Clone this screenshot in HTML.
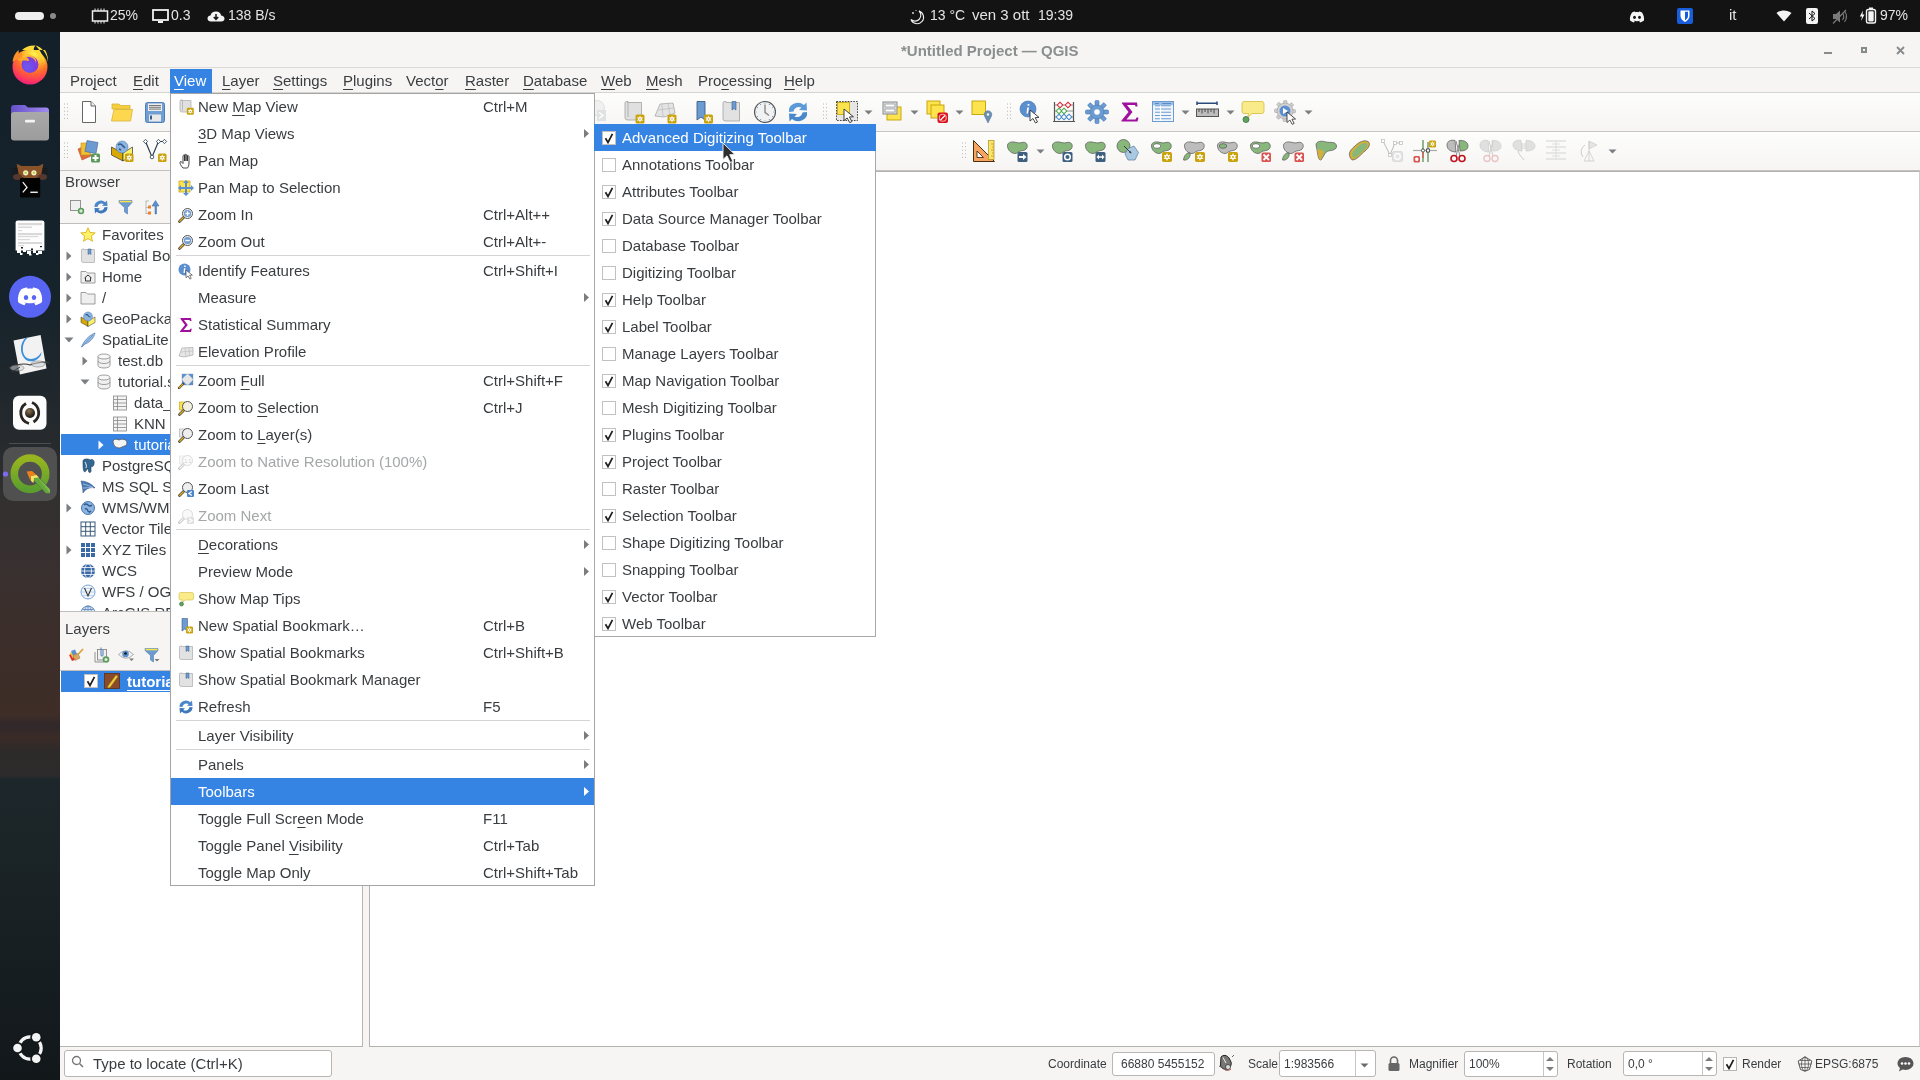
<!DOCTYPE html><html><head><meta charset="utf-8"><title>QGIS</title><style>
*{box-sizing:border-box}
html,body{margin:0;padding:0}
body{width:1920px;height:1080px;overflow:hidden;position:relative;font-family:"Liberation Sans",sans-serif;background:#f6f5f4;color:#3a3d40}
.a{position:absolute}
.t{position:absolute;white-space:pre;font-size:15px;line-height:18px;will-change:transform}
u{text-decoration:underline;text-underline-offset:3px;text-decoration-thickness:1px}
svg{position:absolute;overflow:visible}
</style></head><body>
<div class="a" style="left:0px;top:0px;width:1920px;height:32px;background:#131313"></div>
<div class="a" style="left:15px;top:12px;width:29px;height:8px;background:#eeeeee;border-radius:4px"></div>
<div class="a" style="left:50px;top:13px;width:6px;height:6px;background:#8a8a8a;border-radius:3px"></div>
<div class="t" style="left:110px;top:6px;font-size:14px;color:#e4e4e4;">25%</div>
<div class="t" style="left:171px;top:6px;font-size:14px;color:#e4e4e4;">0.3</div>
<div class="t" style="left:228px;top:6px;font-size:14px;color:#e4e4e4;">138 B/s</div>
<div class="t" style="left:930px;top:6px;font-size:14px;color:#e4e4e4;">13 °C</div>
<div class="t" style="left:972px;top:6px;color:#e4e4e4;">ven 3 ott</div>
<div class="t" style="left:1038px;top:6px;font-size:14px;color:#e4e4e4;">19:39</div>
<div class="t" style="left:1729px;top:6px;color:#e4e4e4;">it</div>
<div class="t" style="left:1880px;top:6px;font-size:14px;color:#e4e4e4;">97%</div>
<svg style="left:91px;top:8px;" width="18" height="16" viewBox="0 0 18 16"><rect x="1.5" y="3" width="15" height="10" fill="none" stroke="#eee" stroke-width="1.5"/><path d="M4 0.5 V3 M7 0.5 V3 M10 0.5 V3 M13 0.5 V3 M4 13 V15.5 M7 13 V15.5 M10 13 V15.5 M13 13 V15.5" stroke="#eee" stroke-width="1"/></svg><svg style="left:152px;top:9px;" width="17" height="15" viewBox="0 0 17 15"><rect x="1" y="1" width="15" height="10" fill="none" stroke="#f2f2f2" stroke-width="1.8"/><rect x="6" y="12" width="5" height="2" fill="#f2f2f2"/></svg><svg style="left:207px;top:11px;" width="18" height="11" viewBox="0 0 18 11"><path d="M4 10.5 C1.5 10.5 0.5 9 0.5 7.5 C0.5 5.5 2 4.5 3.5 4.5 C4 2 6 0.5 9 0.5 C12 0.5 14 2.5 14 4.5 C16 4.5 17.5 6 17.5 7.8 C17.5 9.5 16 10.5 14.5 10.5Z" fill="#f2f2f2"/><path d="M9 3 V8 M6.8 6 L9 8.3 L11.2 6" stroke="#131313" stroke-width="1.5" fill="none"/></svg><svg style="left:909px;top:9px;" width="16" height="15" viewBox="0 0 16 15"><path d="M10 2 A6.5 6.5 0 1 1 2 10.5 A5.5 5.5 0 0 0 10 2Z" fill="none" stroke="#eee" stroke-width="1.1"/><circle cx="4" cy="4" r="0.9" fill="#eee"/><circle cx="7" cy="1.5" r="0.6" fill="#eee"/></svg><svg style="left:1629px;top:11px;" width="16" height="12" viewBox="0 0 16 12"><path d="M3 1.5 C4.5 0.7 5.5 0.5 6 0.5 L6.3 1.2 C7.4 1 8.6 1 9.7 1.2 L10 0.5 C10.5 0.5 11.5 0.7 13 1.5 C14.7 4 15.3 6.5 15 9.5 C13.8 10.5 12.2 11.2 11 11.5 L10.2 10.2 C10.7 10 11.2 9.8 11.6 9.5 C9.3 10.6 6.7 10.6 4.4 9.5 C4.8 9.8 5.3 10 5.8 10.2 L5 11.5 C3.8 11.2 2.2 10.5 1 9.5 C0.7 6.5 1.3 4 3 1.5Z" fill="#f4f4f4"/><ellipse cx="5.5" cy="6.3" rx="1.4" ry="1.6" fill="#131313"/><ellipse cx="10.5" cy="6.3" rx="1.4" ry="1.6" fill="#131313"/></svg><svg style="left:1677px;top:8px;" width="16" height="16" viewBox="0 0 16 16"><rect x="0" y="0" width="16" height="16" rx="2" fill="#175ddc"/><path d="M3.5 2.5 H12.5 V8 C12.5 11 10 13 8 14 C6 13 3.5 11 3.5 8Z" fill="#fff"/><path d="M8 3.8 H11 V8 C11 10 9.5 11.5 8 12.3Z" fill="#175ddc"/></svg><svg style="left:1776px;top:10px;" width="16" height="12" viewBox="0 0 16 12"><path d="M8 11.5 L0.5 3 C4.5 -0.5 11.5 -0.5 15.5 3Z" fill="#f4f4f4"/></svg><svg style="left:1806px;top:8px;" width="12" height="16" viewBox="0 0 12 16"><rect x="0" y="0" width="12" height="16" rx="2" fill="#f4f4f4"/><path d="M3 5 L9 10.5 L6 13 V3 L9 5.5 L3 11" stroke="#131313" stroke-width="1" fill="none"/></svg><svg style="left:1832px;top:9px;" width="16" height="15" viewBox="0 0 16 15"><path d="M1 5 H4 L8 1.5 V13.5 L4 10 H1Z" fill="#7a7a7a"/><path d="M10.5 4 Q13 7.5 10.5 11 M12.5 2 Q16.5 7.5 12.5 13" stroke="#7a7a7a" stroke-width="1.1" fill="none"/><path d="M1 14.5 L14 1" stroke="#7a7a7a" stroke-width="1.2"/></svg><svg style="left:1859px;top:7px;" width="18" height="17" viewBox="0 0 18 17"><path d="M4 3.5 L0.8 9.5 H3 L2 14 L5.5 7.5 H3.5Z" fill="#f4f4f4"/><rect x="7.5" y="2.5" width="9" height="13.5" rx="1.8" fill="none" stroke="#f4f4f4" stroke-width="1.4"/><rect x="10" y="0.5" width="4" height="2" fill="#f4f4f4"/><rect x="9.3" y="4.2" width="5.4" height="10.2" rx="0.8" fill="#f4f4f4"/></svg>
<div class="a" style="left:0px;top:32px;width:60px;height:1048px;background:linear-gradient(180deg,#13202a 0px,#16232b 268px,#262a2d 408px,#333030 468px,#383030 528px,#3c2e2a 608px,#3e2d27 683px,#30282a 693px,#3a2b27 706px,#2e2a2a 718px,#2c2b2b 744px,#1d272b 747px,#1b2427 818px,#161d20 948px,#12171a 1048px)"></div>
<svg style="left:0;top:0" width="60" height="1080" viewBox="0 0 60 1080">
<defs>
<radialGradient id="ffg" cx="0.62" cy="0.12" r="0.95"><stop offset="0" stop-color="#fff44f"/><stop offset="0.3" stop-color="#ffbd2e"/><stop offset="0.55" stop-color="#ff6f2a"/><stop offset="0.8" stop-color="#ff3a5a"/><stop offset="1" stop-color="#e8178a"/></radialGradient>
<radialGradient id="ffp" cx="0.35" cy="0.65" r="0.8"><stop offset="0" stop-color="#6a5cf0"/><stop offset="0.6" stop-color="#7b3fe0"/><stop offset="1" stop-color="#a02fe0"/></radialGradient>
<linearGradient id="fldt" x1="0" y1="0" x2="1" y2="0"><stop offset="0" stop-color="#6650c8"/><stop offset="1" stop-color="#a08cf0"/></linearGradient>
<linearGradient id="fldb" x1="0" y1="0" x2="0" y2="1"><stop offset="0" stop-color="#a9a9a9"/><stop offset="1" stop-color="#9c9c9c"/></linearGradient>
<linearGradient id="qg" x1="0" y1="0" x2="0" y2="1"><stop offset="0" stop-color="#98b51f"/><stop offset="1" stop-color="#5b9e2f"/></linearGradient>
<radialGradient id="ball" cx="0.4" cy="0.3" r="0.7"><stop offset="0" stop-color="#8a7350"/><stop offset="1" stop-color="#151210"/></radialGradient>
</defs>
<!-- firefox -->
<circle cx="30" cy="67" r="17.5" fill="url(#ffg)"/>
<path d="M22 50 C25 47 30 45 35.5 45.5 C33 48 33.5 51 35 52.5 C40 55 44 60 45 66 C44 56 40 50 35.5 45.5 C42 47 47.5 54 48 62 C48.5 58 47 53 45 50Z" fill="#ffd93a"/>
<path d="M12.5 62 C13 57 15 53 18.5 50 L19 54.5 L22 51.5 C21.5 53.5 22 55 23 56 C19 57 16 60 12.5 62Z" fill="#ff8f2a"/>
<circle cx="30" cy="64.5" r="8.5" fill="url(#ffp)"/>
<path d="M17 60 C19.5 57.5 24 56.5 27 57.5 C28.5 58.5 29 60 29 61 C25 60 21 61 17 60Z" fill="#ffa92e"/>
<path d="M22 58 C24 54 30 53.5 33.5 56.5 C36 58.5 36.5 61 36 63 C35 59 31 56 26 57.5Z" fill="#ffbd2e" opacity="0.85"/>
<!-- files -->
<path d="M11 108 Q11 105 14 105 H25 L28 107.5 H46 Q49 107.5 49 110.5 V116 H11Z" fill="url(#fldt)"/>
<rect x="11" y="112" width="38" height="28.5" rx="3" fill="url(#fldb)"/>
<rect x="25" y="119.8" width="10" height="2.6" rx="1.2" fill="#f4f4f4"/>
<!-- terminal cat -->
<path d="M16.7 163.8 L21.5 166 H38.5 L43.3 163.8 L42 172 C41 177 37 178.5 30 178.5 C23 178.5 19 177 18 172Z" fill="#8a5228"/>
<path d="M11 168 L18 169 M11.5 171 L18 170.5 M12 174 L18.5 172 M42 169 L49 168 M42 170.5 L48.5 171 M41.5 172 L48 174" stroke="#1c1410" stroke-width="0.8"/>
<ellipse cx="17.5" cy="177" rx="4.5" ry="3" fill="#56382c"/><ellipse cx="42.5" cy="177" rx="4.5" ry="3" fill="#56382c"/>
<circle cx="25.7" cy="172.8" r="2.6" fill="#f4f4d0"/><circle cx="33.9" cy="172.8" r="2.6" fill="#f4f4d0"/>
<circle cx="25.7" cy="172.8" r="1.3" fill="#c4d040"/><circle cx="33.9" cy="172.8" r="1.3" fill="#c4d040"/>
<rect x="20" y="178" width="20.2" height="19.5" rx="1" fill="#020202"/>
<path d="M22.8 182.2 L27 187.4 L22.8 192.4" stroke="#f4f4f4" stroke-width="1.3" fill="none"/><path d="M30.3 192.3 H37.8" stroke="#e8e8e8" stroke-width="1.5"/>
<!-- text editor -->
<path d="M15.6 222.5 Q15.6 220.4 17.7 220.4 H42.3 Q44.4 220.4 44.4 222.5 V248 L15.6 248Z" fill="#fdfdfd"/>
<g fill="#d9d9d9"><rect x="18" y="223" width="24" height="2.2"/><rect x="18" y="226.5" width="14" height="1.5"/><rect x="18" y="230" width="4" height="1.2"/><rect x="18" y="233" width="24" height="2.2"/><rect x="18" y="236" width="20" height="1.2"/><rect x="18" y="239" width="12" height="1.2"/><rect x="18" y="242" width="24" height="2"/><rect x="18" y="245" width="6" height="1.2"/></g>
<g fill="#fdfdfd"><rect x="15.6" y="248" width="28.8" height="2.5"/><rect x="17" y="250" width="4" height="3"/><rect x="23" y="250" width="3" height="2"/><rect x="27" y="251" width="4" height="3"/><rect x="33" y="250" width="3" height="3"/><rect x="38" y="251" width="4" height="3"/><rect x="20" y="253" width="2.5" height="2"/><rect x="29" y="254" width="2.5" height="1.5"/><rect x="36" y="253" width="2.5" height="2"/></g>
<g fill="#131c22"><rect x="21" y="247" width="2" height="1.5"/><rect x="31" y="248.5" width="2" height="1.5"/><rect x="40" y="246" width="2" height="1.2"/></g>
<!-- discord -->
<circle cx="30" cy="296.8" r="21" fill="#5865f2"/>
<path d="M21 289.5 C23.5 288 26 287.5 27 287.5 L27.6 288.8 C29.3 288.5 30.7 288.5 32.4 288.8 L33 287.5 C34 287.5 36.5 288 39 289.5 C41.5 293 42.5 297 42 302 C40 303.8 37.5 304.8 35.5 305.2 L34.2 303 C35 302.7 35.8 302.3 36.5 301.8 C32.5 303.8 27.5 303.8 23.5 301.8 C24.2 302.3 25 302.7 25.8 303 L24.5 305.2 C22.5 304.8 20 303.8 18 302 C17.5 297 18.5 293 21 289.5Z" fill="#fff"/>
<ellipse cx="26" cy="297.5" rx="2.2" ry="2.5" fill="#5865f2"/><ellipse cx="34" cy="297.5" rx="2.2" ry="2.5" fill="#5865f2"/>
<!-- okular -->
<path d="M13.5 340.4 L40.6 335 L46.5 368.6 L19.9 374.5Z" fill="#f2f2f2"/>
<path d="M28 337.5 C21 343 21.5 355 27 358 C32 360.5 38 358 41.5 352 L41 355 C37 362 29 363 25 359 C19 353 20 342 26 337.8Z" fill="#3a8fd9"/>
<path d="M9 368 C16 364 25 363 30 365 C36 363 44 361 49 363" stroke="#3a3a3a" stroke-width="1.1" fill="none"/>
<ellipse cx="17" cy="368" rx="7" ry="3" fill="#cfd4d8" opacity="0.55" stroke="#555" stroke-width="0.8"/>
<ellipse cx="38" cy="364" rx="7" ry="3" fill="#cfd4d8" opacity="0.55" stroke="#555" stroke-width="0.8"/>
<path d="M12 372 L20 367" stroke="#333" stroke-width="0.9"/>
<!-- app -->
<rect x="13" y="395.7" width="33.5" height="34" rx="6" fill="#fcfcfc"/>
<path d="M26 403.5 A11 11 0 0 0 29 423.5" stroke="#2a2520" stroke-width="2.8" fill="none"/>
<path d="M33.5 422 A11 11 0 0 0 32 402.5" stroke="#2a2520" stroke-width="2.8" fill="none"/>
<circle cx="30" cy="413" r="5" fill="url(#ball)"/>
<rect x="9" y="443" width="42" height="1" fill="#4a4e50"/>
<!-- qgis -->
<rect x="3" y="447" width="54" height="54" rx="10" fill="#505050"/>
<circle cx="30" cy="473.7" r="15.7" fill="none" stroke="url(#qg)" stroke-width="7.6"/>
<path d="M29 476 L33 472 L52 491 L48 495Z" fill="#505050"/>
<path d="M31.5 478 L35 474.5 L50 489.5 L50 493.3 L46 493.3Z" fill="#63a838"/>
<path d="M35 474.5 L50 489.5 L50 493.3Z" fill="#7fb950"/>
<path d="M26.6 471.5 L32 471 L36.5 475 L31 476 L30.5 481Z" fill="#f07f1a"/>
<path d="M31 476 L36.5 475 L39 477.5 L34 478 L33.5 483 L31 481Z" fill="#f5e462"/>
<circle cx="5.5" cy="474" r="2.6" fill="#7b6cf0"/>
<!-- ubuntu -->
<circle cx="30" cy="1048" r="11.2" fill="none" stroke="#f4f4f4" stroke-width="3.2"/>
<circle cx="17.5" cy="1048" r="6" fill="#12171a"/><circle cx="36.25" cy="1037.2" r="6" fill="#12171a"/><circle cx="36.25" cy="1058.8" r="6" fill="#12171a"/>
<circle cx="17.5" cy="1048" r="4.3" fill="#f4f4f4"/><circle cx="36.25" cy="1037.2" r="4.3" fill="#f4f4f4"/><circle cx="36.25" cy="1058.8" r="4.3" fill="#f4f4f4"/>
</svg>
<div class="a" style="left:60px;top:32px;width:1860px;height:36px;background:#f6f5f4;border-bottom:1px solid #dcdad7"></div>
<div class="t" style="left:901px;top:42px;color:#8a8e8f;font-weight:bold;">*Untitled Project — QGIS</div>
<div class="a" style="left:1824px;top:52px;width:8px;height:2px;background:#888b8c"></div>
<div class="a" style="left:1861px;top:47px;width:6px;height:6px;border:2px solid #888b8c"></div>
<svg style="left:1896px;top:46px;" width="9" height="9" viewBox="0 0 9 9"><path d="M1 1 L8 8 M8 1 L1 8" stroke="#888b8c" stroke-width="1.9"/></svg>
<div class="a" style="left:60px;top:68px;width:1860px;height:25px;background:#f6f5f4;border-bottom:1px solid #d6d4d0"></div>
<div class="a" style="left:170px;top:69px;width:42px;height:24px;background:#3584e4"></div>
<div class="t" style="left:70px;top:72px;">Pro<u>j</u>ect</div>
<div class="t" style="left:133px;top:72px;"><u>E</u>dit</div>
<div class="t" style="left:174px;top:72px;color:#ffffff;"><u>V</u>iew</div>
<div class="t" style="left:222px;top:72px;"><u>L</u>ayer</div>
<div class="t" style="left:273px;top:72px;"><u>S</u>ettings</div>
<div class="t" style="left:343px;top:72px;"><u>P</u>lugins</div>
<div class="t" style="left:406px;top:72px;">Vect<u>o</u>r</div>
<div class="t" style="left:465px;top:72px;"><u>R</u>aster</div>
<div class="t" style="left:523px;top:72px;"><u>D</u>atabase</div>
<div class="t" style="left:601px;top:72px;"><u>W</u>eb</div>
<div class="t" style="left:646px;top:72px;"><u>M</u>esh</div>
<div class="t" style="left:698px;top:72px;">Pro<u>c</u>essing</div>
<div class="t" style="left:784px;top:72px;"><u>H</u>elp</div>
<div class="a" style="left:60px;top:93px;width:1860px;height:39px;background:linear-gradient(#fdfdfc,#f6f5f4);border-bottom:1px solid #c8c6c2"></div>
<div class="a" style="left:60px;top:132px;width:1860px;height:39px;background:linear-gradient(#fdfdfc,#f6f5f4);border-bottom:1px solid #c4c2be"></div>
<svg style="left:63px;top:103px;" width="8" height="18" viewBox="0 0 8 18"><rect x="1" y="0.5" width="1" height="1" fill="#b5b5b5"/><rect x="4" y="0.5" width="1" height="1" fill="#b5b5b5"/><rect x="1" y="4.1" width="1" height="1" fill="#b5b5b5"/><rect x="4" y="4.1" width="1" height="1" fill="#b5b5b5"/><rect x="1" y="7.7" width="1" height="1" fill="#b5b5b5"/><rect x="4" y="7.7" width="1" height="1" fill="#b5b5b5"/><rect x="1" y="11.3" width="1" height="1" fill="#b5b5b5"/><rect x="4" y="11.3" width="1" height="1" fill="#b5b5b5"/><rect x="1" y="14.9" width="1" height="1" fill="#b5b5b5"/><rect x="4" y="14.9" width="1" height="1" fill="#b5b5b5"/></svg>
<svg style="left:77px;top:100px;" width="24" height="24" viewBox="0 0 24 24"><path d="M5.5 1.5 H14 L18.5 6 V22.5 H5.5 Z" fill="#fff" stroke="#666" stroke-width="1"/><path d="M14 1.5 V6 H18.5" fill="#eee" stroke="#666" stroke-width="1"/></svg>
<svg style="left:110px;top:100px;" width="24" height="24" viewBox="0 0 24 24"><path d="M2 4 H9 L10.5 5.5 H20 V9 H2Z" fill="#f5cf3d" stroke="#d8b23a" stroke-width="0.8"/><path d="M1.5 21 L4 9.5 H22.5 L20.5 21Z" fill="#fdd84f" stroke="#d8b23a" stroke-width="0.8"/></svg>
<svg style="left:143px;top:100px;" width="24" height="24" viewBox="0 0 24 24"><rect x="2.5" y="2.5" width="19" height="20" rx="2" fill="#6f9fd5" stroke="#4f7fb8"/><rect x="5" y="3.5" width="14" height="7.5" fill="#eee"/><path d="M6 5.5 H18 M6 7.3 H18 M6 9.1 H18" stroke="#555" stroke-width="0.8"/><rect x="6" y="14.5" width="12" height="7" fill="#e8e8e8"/><rect x="7" y="15.5" width="2" height="4" fill="#3b5f8a"/></svg>
<svg style="left:589px;top:100px;" width="24" height="24" viewBox="0 0 24 24"><circle cx="8" cy="8" r="7.5" fill="#f0f0f0" stroke="#e0e0e0"/><rect x="8" y="10" width="9" height="11" fill="#dfe1e3"/><path d="M10 12.5 L14 15.5 L10 18.5" stroke="#fff" stroke-width="1.5" fill="none"/></svg>
<svg style="left:622px;top:100px;" width="24" height="24" viewBox="0 0 24 24"><path d="M3 3 Q3 1.5 4.5 1.5 H6 V2.5 H19.5 V20 H6 Q3 20 3 18Z" fill="#e0e0e0" stroke="#aaa" stroke-width="0.9"/><path d="M4.5 1.5 Q6 1.5 6 3 V17" stroke="#aaa" stroke-width="0.9" fill="none"/><rect x="13.5" y="14.5" width="9" height="9" rx="1.62" fill="#c9a20c"/><polygon points="18.00,15.40 18.90,17.44 21.12,17.20 19.80,19.00 21.12,20.80 18.90,20.56 18.00,22.60 17.10,20.56 14.88,20.80 16.20,19.00 14.88,17.20 17.10,17.44" fill="#fff"/><circle cx="18.0" cy="19.0" r="0.81" fill="#c9a20c"/></svg>
<svg style="left:654px;top:100px;" width="24" height="24" viewBox="0 0 24 24"><path d="M1 16 L6 4 L19 3 L21 13 L10 17Z" fill="#e4e4e4" stroke="#aaa" stroke-width="0.8"/><path d="M4 10 L20 8 M8 4 L9 16 M14 3.5 L16 15" stroke="#bbb" stroke-width="0.7"/><rect x="13.5" y="14.5" width="9" height="9" rx="1.62" fill="#c9a20c"/><polygon points="18.00,15.40 18.90,17.44 21.12,17.20 19.80,19.00 21.12,20.80 18.90,20.56 18.00,22.60 17.10,20.56 14.88,20.80 16.20,19.00 14.88,17.20 17.10,17.44" fill="#fff"/><circle cx="18.0" cy="19.0" r="0.81" fill="#c9a20c"/></svg>
<svg style="left:690px;top:100px;" width="24" height="24" viewBox="0 0 24 24"><path d="M7 1.5 H15 V20 L11 17 L7 20Z" fill="#6b9bd1" stroke="#3c5f8a" stroke-width="0.9"/><rect x="14" y="14.5" width="9" height="9" rx="1.62" fill="#c9a20c"/><polygon points="18.50,15.40 19.40,17.44 21.62,17.20 20.30,19.00 21.62,20.80 19.40,20.56 18.50,22.60 17.60,20.56 15.38,20.80 16.70,19.00 15.38,17.20 17.60,17.44" fill="#fff"/><circle cx="18.5" cy="19.0" r="0.81" fill="#c9a20c"/></svg>
<svg style="left:720px;top:100px;" width="24" height="24" viewBox="0 0 24 24"><path d="M3 3 Q3 1.5 4.5 1.5 H6 V2.5 H19.5 V21 H6 Q3 21 3 19Z" fill="#e2e2e2" stroke="#aaa" stroke-width="0.9"/><path d="M12 1.5 H16 V10 L14 8.5 L12 10Z" fill="#6b9bd1" stroke="#3c5f8a" stroke-width="0.6"/></svg>
<svg style="left:753px;top:100px;" width="24" height="24" viewBox="0 0 24 24"><circle cx="12" cy="12" r="10.5" fill="#f2f2f2" stroke="#555" stroke-width="1.1"/><path d="M12 4.5 V12.3 L16 15.5" stroke="#888" stroke-width="1.4" fill="none"/><g fill="#6b9bd1"><circle cx="20.80" cy="12.00" r="0.6"/><circle cx="19.62" cy="16.40" r="0.6"/><circle cx="16.40" cy="19.62" r="0.6"/><circle cx="12.00" cy="20.80" r="0.6"/><circle cx="7.60" cy="19.62" r="0.6"/><circle cx="4.38" cy="16.40" r="0.6"/><circle cx="3.20" cy="12.00" r="0.6"/><circle cx="4.38" cy="7.60" r="0.6"/><circle cx="7.60" cy="4.38" r="0.6"/><circle cx="12.00" cy="3.20" r="0.6"/><circle cx="16.40" cy="4.38" r="0.6"/><circle cx="19.62" cy="7.60" r="0.6"/></g></svg>
<svg style="left:786px;top:100px;" width="24" height="24" viewBox="0 0 24 24"><path d="M3 12 A9 8 0 0 1 18 5 L20.5 2.5 L21 10.5 L13 10 L15.5 7.5 A5.5 5 0 0 0 7.5 11.5Z" fill="#5a9ad8"/><path d="M21 12 A9 8 0 0 1 6 19 L3.5 21.5 L3 13.5 L11 14 L8.5 16.5 A5.5 5 0 0 0 16.5 12.5Z" fill="#4a88cc"/></svg>
<svg style="left:835px;top:100px;" width="24" height="24" viewBox="0 0 24 24"><rect x="1.5" y="1.5" width="21" height="19" fill="#e6e6e6" stroke="#333" stroke-width="0.9" stroke-dasharray="1.6 1.2"/><rect x="2.5" y="2.5" width="12" height="12" fill="#fde34e" stroke="#c4a000" stroke-width="0.8"/><path transform="translate(9 9) scale(1.05)" d="M0 0 L0 11 L3 8.5 L5.5 13 L7.5 12 L5.2 7.6 L9 7.4 Z" fill="#fff" stroke="#333" stroke-width="0.9" stroke-linejoin="round"/></svg>
<svg style="left:882px;top:100px;" width="24" height="24" viewBox="0 0 24 24"><rect x="5" y="7" width="14" height="13" fill="#fde34e" stroke="#c4a000" stroke-width="0.9"/><rect x="1" y="2" width="14" height="12" fill="#e0e4ea" stroke="#888" stroke-width="1"/><rect x="3" y="4" width="10" height="3" fill="#fff" stroke="#777" stroke-width="0.6"/><rect x="3" y="9" width="10" height="3" fill="#fff" stroke="#777" stroke-width="0.6"/></svg>
<svg style="left:926px;top:100px;" width="24" height="24" viewBox="0 0 24 24"><rect x="1" y="1" width="13" height="13" fill="#fde34e" stroke="#c4a000" stroke-width="0.9"/><rect x="5" y="5" width="13" height="13" fill="#fde34e" stroke="#c4a000" stroke-width="0.9"/><rect x="11.5" y="12.5" width="10.5" height="10.5" rx="2" fill="#d8111b"/><circle cx="16.75" cy="17.75" r="3.5" fill="none" stroke="#f4a0a0" stroke-width="1.2"/><path d="M14.5 20 L19 15.5" stroke="#fff" stroke-width="1.2"/></svg>
<svg style="left:971px;top:100px;" width="24" height="24" viewBox="0 0 24 24"><rect x="1" y="1" width="13.5" height="13.5" fill="#fde34e" stroke="#c4a000" stroke-width="0.9"/><path d="M17 23 L13.5 16 A3.8 3.8 0 1 1 20.5 16Z" fill="#6b8fb0" stroke="#4f6f90" stroke-width="0.5"/><circle cx="17" cy="14.5" r="1.2" fill="#fff"/></svg>
<svg style="left:1019px;top:100px;" width="24" height="24" viewBox="0 0 24 24"><circle cx="9" cy="9" r="8" fill="#5b8fd0" stroke="#4070b0" stroke-width="0.6"/><path d="M8.2 7.5 H10 L9 13.5 H7.5Z M8.6 4 h1.8 v1.8 h-1.8z" fill="#fff"/><path transform="translate(11 10) scale(1.0)" d="M0 0 L0 11 L3 8.5 L5.5 13 L7.5 12 L5.2 7.6 L9 7.4 Z" fill="#fff" stroke="#333" stroke-width="0.9" stroke-linejoin="round"/></svg>
<svg style="left:1052px;top:100px;" width="24" height="24" viewBox="0 0 24 24"><path d="M2.5 2 V21 M21.5 2 V21 M1 21.5 H23" stroke="#555" stroke-width="1.2"/><path d="M2.5 5 H21.5 M2.5 11 H21.5 M2.5 17 H21.5" stroke="#777" stroke-width="0.8"/><rect x="6" y="3" width="4" height="4" transform="rotate(45 8 5)" fill="#fff" stroke="#d23" stroke-width="1"/><rect x="14" y="3" width="4" height="4" transform="rotate(45 16 5)" fill="#fff" stroke="#d23" stroke-width="1"/><rect x="5" y="9" width="4" height="4" transform="rotate(45 7 11)" fill="#fff" stroke="#4a4" stroke-width="1"/><rect x="10" y="9" width="4" height="4" transform="rotate(45 12 11)" fill="#fff" stroke="#4a4" stroke-width="1"/><rect x="5" y="15" width="4" height="4" transform="rotate(45 7 17)" fill="#fff" stroke="#48c" stroke-width="1"/><rect x="10" y="15" width="4" height="4" transform="rotate(45 12 17)" fill="#fff" stroke="#48c" stroke-width="1"/><rect x="15" y="15" width="4" height="4" transform="rotate(45 17 17)" fill="#fff" stroke="#48c" stroke-width="1"/></svg>
<svg style="left:1085px;top:100px;" width="24" height="24" viewBox="0 0 24 24"><g fill="#6b9bd1" stroke="#4a7ab5" stroke-width="0.6"><rect x="10" y="0.5" width="4" height="5.5" rx="1" transform="rotate(0 12 12)"/><rect x="10" y="0.5" width="4" height="5.5" rx="1" transform="rotate(45 12 12)"/><rect x="10" y="0.5" width="4" height="5.5" rx="1" transform="rotate(90 12 12)"/><rect x="10" y="0.5" width="4" height="5.5" rx="1" transform="rotate(135 12 12)"/><rect x="10" y="0.5" width="4" height="5.5" rx="1" transform="rotate(180 12 12)"/><rect x="10" y="0.5" width="4" height="5.5" rx="1" transform="rotate(225 12 12)"/><rect x="10" y="0.5" width="4" height="5.5" rx="1" transform="rotate(270 12 12)"/><rect x="10" y="0.5" width="4" height="5.5" rx="1" transform="rotate(315 12 12)"/><circle cx="12" cy="12" r="7"/></g><circle cx="12" cy="12" r="2.8" fill="#fff"/></svg>
<svg style="left:1118px;top:100px;" width="24" height="24" viewBox="0 0 24 24"><path d="M4 2.5 H19 L19.5 6.5 H17.5 L17 5 H9 L14.5 12 L8.5 19.5 H17.5 L18.5 17.5 H20.5 L19.5 21.5 H3.5 V20.5 L10.5 12 L4 3.5Z" fill="#a0109f"/></svg>
<svg style="left:1151px;top:100px;" width="24" height="24" viewBox="0 0 24 24"><rect x="1.5" y="1.5" width="21" height="20" fill="#f0f5fb" stroke="#6b9bd1" stroke-width="1"/><rect x="2" y="2" width="20" height="3.2" fill="#9cc0e6"/><path d="M4 5.8 H20 M4 9 H20 M4 12.3 H20 M4 15.5 H20 M4 18.7 H20" stroke="#6b9bd1" stroke-width="1.1"/><path d="M9.5 5.5 V21" stroke="#fff" stroke-width="1.2"/><path d="M4 3.5 H8 M11 3.5 H20" stroke="#5b8bc1" stroke-width="1.2"/></svg>
<svg style="left:1196px;top:100px;" width="24" height="24" viewBox="0 0 24 24"><path d="M1 1.5 V5 M1 3.2 H21 M21 1.5 V5" stroke="#2a4a7a" stroke-width="1.5"/><rect x="0.5" y="9" width="22" height="7.5" fill="#bdbdbd" stroke="#555" stroke-width="1"/><path d="M3 9 V12 M6 9 V13.5 M9 9 V12 M12 9 V13.5 M15 9 V12 M18 9 V13.5" stroke="#333" stroke-width="0.8"/></svg>
<svg style="left:1241px;top:100px;" width="24" height="24" viewBox="0 0 24 24"><path d="M3 1.5 H21 Q23 1.5 23 4 V11 Q23 13.5 21 13.5 H11 L7 17 L7.5 13.5 H3 Q1 13.5 1 11 V4 Q1 1.5 3 1.5Z" fill="#faeb8a" stroke="#d9c34a" stroke-width="0.9"/><circle cx="5" cy="19.5" r="3" fill="#5fa35f" stroke="#3b703b" stroke-width="0.8"/></svg>
<svg style="left:1274px;top:100px;" width="24" height="24" viewBox="0 0 24 24"><g fill="#d0d0d0" stroke="#999" stroke-width="0.5"><rect x="9.5" y="0.5" width="3.5" height="4.5" rx="1" transform="rotate(0 11 11)"/><rect x="9.5" y="0.5" width="3.5" height="4.5" rx="1" transform="rotate(45 11 11)"/><rect x="9.5" y="0.5" width="3.5" height="4.5" rx="1" transform="rotate(90 11 11)"/><rect x="9.5" y="0.5" width="3.5" height="4.5" rx="1" transform="rotate(135 11 11)"/><rect x="9.5" y="0.5" width="3.5" height="4.5" rx="1" transform="rotate(180 11 11)"/><rect x="9.5" y="0.5" width="3.5" height="4.5" rx="1" transform="rotate(225 11 11)"/><rect x="9.5" y="0.5" width="3.5" height="4.5" rx="1" transform="rotate(270 11 11)"/><rect x="9.5" y="0.5" width="3.5" height="4.5" rx="1" transform="rotate(315 11 11)"/><circle cx="11" cy="11" r="8"/></g><circle cx="11" cy="11" r="5.5" fill="#5b8fd0"/><path d="M9 8 L14 11 L9 14Z" fill="#fff"/><path transform="translate(13 12) scale(0.95)" d="M0 0 L0 11 L3 8.5 L5.5 13 L7.5 12 L5.2 7.6 L9 7.4 Z" fill="#fff" stroke="#333" stroke-width="0.9" stroke-linejoin="round"/></svg>
<svg style="left:822px;top:103px;" width="8" height="18" viewBox="0 0 8 18"><rect x="1" y="0.5" width="1" height="1" fill="#b5b5b5"/><rect x="4" y="0.5" width="1" height="1" fill="#b5b5b5"/><rect x="1" y="4.1" width="1" height="1" fill="#b5b5b5"/><rect x="4" y="4.1" width="1" height="1" fill="#b5b5b5"/><rect x="1" y="7.7" width="1" height="1" fill="#b5b5b5"/><rect x="4" y="7.7" width="1" height="1" fill="#b5b5b5"/><rect x="1" y="11.3" width="1" height="1" fill="#b5b5b5"/><rect x="4" y="11.3" width="1" height="1" fill="#b5b5b5"/><rect x="1" y="14.9" width="1" height="1" fill="#b5b5b5"/><rect x="4" y="14.9" width="1" height="1" fill="#b5b5b5"/></svg>
<svg style="left:1006px;top:103px;" width="8" height="18" viewBox="0 0 8 18"><rect x="1" y="0.5" width="1" height="1" fill="#b5b5b5"/><rect x="4" y="0.5" width="1" height="1" fill="#b5b5b5"/><rect x="1" y="4.1" width="1" height="1" fill="#b5b5b5"/><rect x="4" y="4.1" width="1" height="1" fill="#b5b5b5"/><rect x="1" y="7.7" width="1" height="1" fill="#b5b5b5"/><rect x="4" y="7.7" width="1" height="1" fill="#b5b5b5"/><rect x="1" y="11.3" width="1" height="1" fill="#b5b5b5"/><rect x="4" y="11.3" width="1" height="1" fill="#b5b5b5"/><rect x="1" y="14.9" width="1" height="1" fill="#b5b5b5"/><rect x="4" y="14.9" width="1" height="1" fill="#b5b5b5"/></svg>
<svg style="left:864px;top:110px" width="9" height="5"><path d="M0.5 0.5 H8.5 L4.5 4.5Z" fill="#7b7e80"/></svg>
<svg style="left:910px;top:110px" width="9" height="5"><path d="M0.5 0.5 H8.5 L4.5 4.5Z" fill="#7b7e80"/></svg>
<svg style="left:955px;top:110px" width="9" height="5"><path d="M0.5 0.5 H8.5 L4.5 4.5Z" fill="#7b7e80"/></svg>
<svg style="left:1181px;top:110px" width="9" height="5"><path d="M0.5 0.5 H8.5 L4.5 4.5Z" fill="#7b7e80"/></svg>
<svg style="left:1226px;top:110px" width="9" height="5"><path d="M0.5 0.5 H8.5 L4.5 4.5Z" fill="#7b7e80"/></svg>
<svg style="left:1304px;top:110px" width="9" height="5"><path d="M0.5 0.5 H8.5 L4.5 4.5Z" fill="#7b7e80"/></svg>
<svg style="left:63px;top:142px;" width="8" height="18" viewBox="0 0 8 18"><rect x="1" y="0.5" width="1" height="1" fill="#b5b5b5"/><rect x="4" y="0.5" width="1" height="1" fill="#b5b5b5"/><rect x="1" y="4.1" width="1" height="1" fill="#b5b5b5"/><rect x="4" y="4.1" width="1" height="1" fill="#b5b5b5"/><rect x="1" y="7.7" width="1" height="1" fill="#b5b5b5"/><rect x="4" y="7.7" width="1" height="1" fill="#b5b5b5"/><rect x="1" y="11.3" width="1" height="1" fill="#b5b5b5"/><rect x="4" y="11.3" width="1" height="1" fill="#b5b5b5"/><rect x="1" y="14.9" width="1" height="1" fill="#b5b5b5"/><rect x="4" y="14.9" width="1" height="1" fill="#b5b5b5"/></svg>
<svg style="left:961px;top:142px;" width="8" height="18" viewBox="0 0 8 18"><rect x="1" y="0.5" width="1" height="1" fill="#b5b5b5"/><rect x="4" y="0.5" width="1" height="1" fill="#b5b5b5"/><rect x="1" y="4.1" width="1" height="1" fill="#b5b5b5"/><rect x="4" y="4.1" width="1" height="1" fill="#b5b5b5"/><rect x="1" y="7.7" width="1" height="1" fill="#b5b5b5"/><rect x="4" y="7.7" width="1" height="1" fill="#b5b5b5"/><rect x="1" y="11.3" width="1" height="1" fill="#b5b5b5"/><rect x="4" y="11.3" width="1" height="1" fill="#b5b5b5"/><rect x="1" y="14.9" width="1" height="1" fill="#b5b5b5"/><rect x="4" y="14.9" width="1" height="1" fill="#b5b5b5"/></svg>
<svg style="left:77px;top:139px;" width="24" height="24" viewBox="0 0 24 24"><path d="M1 10 L10 6 L14 17 L5 21Z" fill="#e06b3a" stroke="#b5542c" stroke-width="0.6"/><path d="M4 4 L13 4 L13 16 L4 16Z" fill="#f0c030" stroke="#c09020" stroke-width="0.6"/><path d="M10 1.5 L21 3.5 L19 14.5 L8 12.5Z" fill="#6b9bd1" stroke="#41648f" stroke-width="0.6"/><rect x="14" y="14.5" width="9" height="9" rx="1.5" fill="#5a9a5a"/><path d="M18.5 16.0 V22.0 M15.5 19.0 H21.5" stroke="#fff" stroke-width="2"/></svg>
<svg style="left:110px;top:139px;" width="24" height="24" viewBox="0 0 24 24"><path d="M1.5 8 L13 14 L13 22 L1.5 16Z" fill="#d9a800" stroke="#333" stroke-width="0.7"/><path d="M13 14 L22.5 8 L22.5 16 L13 22Z" fill="#fbf06a" stroke="#333" stroke-width="0.7"/><circle cx="12" cy="8" r="6" fill="#8db4e0" stroke="#5780b0" stroke-width="0.6"/><path d="M8 6 Q10 4 12 6 T15 9 M9 10 L11 11" stroke="#2e5a8a" stroke-width="1.6" fill="none"/><rect x="15" y="14.5" width="8.5" height="8.5" rx="1.53" fill="#c9a20c"/><polygon points="19.25,15.35 20.10,17.28 22.19,17.05 20.95,18.75 22.19,20.45 20.10,20.22 19.25,22.15 18.40,20.22 16.31,20.45 17.55,18.75 16.31,17.05 18.40,17.28" fill="#fff"/><circle cx="19.25" cy="18.75" r="0.77" fill="#c9a20c"/></svg>
<svg style="left:143px;top:139px;" width="24" height="24" viewBox="0 0 24 24"><path d="M2.5 2.5 L9 18 L15.5 2.5 L21.5 2.5" stroke="#2d3e50" stroke-width="1.2" fill="none"/><rect x="1" y="1" width="3" height="3" transform="rotate(45 2.5 2.5)" fill="#fff" stroke="#2d3e50" stroke-width="0.8"/><rect x="14" y="1" width="3" height="3" transform="rotate(45 15.5 2.5)" fill="#fff" stroke="#2d3e50" stroke-width="0.8"/><rect x="20" y="1" width="3" height="3" transform="rotate(45 21.5 2.5)" fill="#fff" stroke="#2d3e50" stroke-width="0.8"/><circle cx="9" cy="18" r="1.8" fill="#fff" stroke="#2d3e50" stroke-width="0.8"/><rect x="15" y="14.5" width="8.5" height="8.5" rx="1.53" fill="#c9a20c"/><polygon points="19.25,15.35 20.10,17.28 22.19,17.05 20.95,18.75 22.19,20.45 20.10,20.22 19.25,22.15 18.40,20.22 16.31,20.45 17.55,18.75 16.31,17.05 18.40,17.28" fill="#fff"/><circle cx="19.25" cy="18.75" r="0.77" fill="#c9a20c"/></svg>
<svg style="left:972px;top:139px;" width="24" height="24" viewBox="0 0 24 24"><path d="M1.5 1.5 L22.5 22.5 H1.5Z" fill="#f7a460" stroke="#4a2e10" stroke-width="1"/><path d="M5 12 L11.5 18.5 H5Z" fill="#fff" stroke="#4a2e10" stroke-width="0.9"/><rect x="16.5" y="1.5" width="5.5" height="19" fill="#fbe46a" stroke="#b59a2a" stroke-width="0.8"/><path d="M19 5 H22 M20 8 H22 M19 11 H22 M20 14 H22 M19 17 H22" stroke="#b59a2a" stroke-width="0.8"/></svg>
<svg style="left:1005px;top:139px;" width="24" height="24" viewBox="0 0 24 24"><path d="M2.5 7.5 C2 3.5 6 2.5 9 3 C12 3.5 14 4.5 17 3.5 C21 2.5 23 5.5 22 8.5 C21 11.5 18 11.5 15.5 12 C13 12.5 12.5 14.5 10 14.5 C6.5 14.5 3 11.5 2.5 7.5Z" fill="#88b77b" stroke="#555" stroke-width="0.7"/><rect x="12.5" y="13" width="10" height="10" rx="1.5" fill="#3f5f7f"/><path d="M14 17 H18 V15 L21.5 18 L18 21 V19 H14Z" fill="#fff"/></svg>
<svg style="left:1050px;top:139px;" width="24" height="24" viewBox="0 0 24 24"><path d="M2.5 7.5 C2 3.5 6 2.5 9 3 C12 3.5 14 4.5 17 3.5 C21 2.5 23 5.5 22 8.5 C21 11.5 18 11.5 15.5 12 C13 12.5 12.5 14.5 10 14.5 C6.5 14.5 3 11.5 2.5 7.5Z" fill="#88b77b" stroke="#555" stroke-width="0.7"/><rect x="12.5" y="13" width="10" height="10" rx="1.5" fill="#3f5f7f"/><circle cx="17.5" cy="18" r="2.8" fill="none" stroke="#fff" stroke-width="1.5"/></svg>
<svg style="left:1083px;top:139px;" width="24" height="24" viewBox="0 0 24 24"><path d="M2.5 7.5 C2 3.5 6 2.5 9 3 C12 3.5 14 4.5 17 3.5 C21 2.5 23 5.5 22 8.5 C21 11.5 18 11.5 15.5 12 C13 12.5 12.5 14.5 10 14.5 C6.5 14.5 3 11.5 2.5 7.5Z" fill="#88b77b" stroke="#555" stroke-width="0.7"/><rect x="12.5" y="13" width="10" height="10" rx="1.5" fill="#3f5f7f"/><path d="M13.5 18 L16 15.5 V20.5Z M21.5 18 L19 15.5 V20.5Z M16 17.2 H19 V18.8 H16Z" fill="#fff"/></svg>
<svg style="left:1116px;top:139px;" width="24" height="24" viewBox="0 0 24 24"><circle cx="7.5" cy="7" r="6.5" fill="#88b77b" stroke="#555" stroke-width="0.7"/><path d="M12 9.5 L18 7 L22.5 13.5 L19 21 H12 L9 15Z" fill="#a9c9e3" stroke="#5a7a9a" stroke-width="0.7"/><path d="M8 7 L15 14" stroke="#333" stroke-width="1"/><path d="M15.5 14.5 L13 13.8 L14.8 12Z" fill="#333"/></svg>
<svg style="left:1149px;top:139px;" width="24" height="24" viewBox="0 0 24 24"><path d="M2.5 7.5 C2 3.5 6 2.5 9 3 C12 3.5 14 4.5 17 3.5 C21 2.5 23 5.5 22 8.5 C21 11.5 18 11.5 15.5 12 C13 12.5 12.5 14.5 10 14.5 C6.5 14.5 3 11.5 2.5 7.5Z" fill="#88b77b" stroke="#555" stroke-width="0.7"/><ellipse cx="8" cy="7" rx="3.8" ry="2.3" fill="#fff" stroke="#555" stroke-width="0.7"/><rect x="13" y="13" width="10" height="10" rx="1.80" fill="#c9a20c"/><polygon points="18.00,14.00 19.00,16.27 21.46,16.00 20.00,18.00 21.46,20.00 19.00,19.73 18.00,22.00 17.00,19.73 14.54,20.00 16.00,18.00 14.54,16.00 17.00,16.27" fill="#fff"/><circle cx="18.0" cy="18.0" r="0.90" fill="#c9a20c"/></svg>
<svg style="left:1182px;top:139px;" width="24" height="24" viewBox="0 0 24 24"><path d="M2.5 7.5 C2 3.5 6 2.5 9 3 C12 3.5 14 4.5 17 3.5 C21 2.5 23 5.5 22 8.5 C21 11.5 18 11.5 15.5 12 C13 12.5 12.5 14.5 10 14.5 C6.5 14.5 3 11.5 2.5 7.5Z" fill="#bdbdbd" stroke="#555" stroke-width="0.7"/><path d="M1.5 21 C2 16 5 13.5 8 14 C9 17 6 22 1.5 21Z" fill="#88b77b" stroke="#555" stroke-width="0.7"/><rect x="13" y="13" width="10" height="10" rx="1.80" fill="#c9a20c"/><polygon points="18.00,14.00 19.00,16.27 21.46,16.00 20.00,18.00 21.46,20.00 19.00,19.73 18.00,22.00 17.00,19.73 14.54,20.00 16.00,18.00 14.54,16.00 17.00,16.27" fill="#fff"/><circle cx="18.0" cy="18.0" r="0.90" fill="#c9a20c"/></svg>
<svg style="left:1215px;top:139px;" width="24" height="24" viewBox="0 0 24 24"><path d="M2.5 7.5 C2 3.5 6 2.5 9 3 C12 3.5 14 4.5 17 3.5 C21 2.5 23 5.5 22 8.5 C21 11.5 18 11.5 15.5 12 C13 12.5 12.5 14.5 10 14.5 C6.5 14.5 3 11.5 2.5 7.5Z" fill="#bdbdbd" stroke="#555" stroke-width="0.7"/><ellipse cx="8" cy="7" rx="3.8" ry="2.3" fill="#88b77b" stroke="#555" stroke-width="0.7"/><rect x="13" y="13" width="10" height="10" rx="1.80" fill="#c9a20c"/><polygon points="18.00,14.00 19.00,16.27 21.46,16.00 20.00,18.00 21.46,20.00 19.00,19.73 18.00,22.00 17.00,19.73 14.54,20.00 16.00,18.00 14.54,16.00 17.00,16.27" fill="#fff"/><circle cx="18.0" cy="18.0" r="0.90" fill="#c9a20c"/></svg>
<svg style="left:1248px;top:139px;" width="24" height="24" viewBox="0 0 24 24"><path d="M2.5 7.5 C2 3.5 6 2.5 9 3 C12 3.5 14 4.5 17 3.5 C21 2.5 23 5.5 22 8.5 C21 11.5 18 11.5 15.5 12 C13 12.5 12.5 14.5 10 14.5 C6.5 14.5 3 11.5 2.5 7.5Z" fill="#88b77b" stroke="#555" stroke-width="0.7"/><ellipse cx="8" cy="7" rx="3.8" ry="2.3" fill="#fff" stroke="#555" stroke-width="0.7"/><rect x="13.5" y="13.5" width="9.5" height="9.5" rx="1.5" fill="#d9534f"/><path d="M15.5 15.5 L21.0 21.0 M21.0 15.5 L15.5 21.0" stroke="#fff" stroke-width="1.8"/></svg>
<svg style="left:1281px;top:139px;" width="24" height="24" viewBox="0 0 24 24"><path d="M2.5 7.5 C2 3.5 6 2.5 9 3 C12 3.5 14 4.5 17 3.5 C21 2.5 23 5.5 22 8.5 C21 11.5 18 11.5 15.5 12 C13 12.5 12.5 14.5 10 14.5 C6.5 14.5 3 11.5 2.5 7.5Z" fill="#bdbdbd" stroke="#555" stroke-width="0.7"/><path d="M1.5 21 C2 16 5 13.5 8 14 C9 17 6 22 1.5 21Z" fill="#88b77b" stroke="#555" stroke-width="0.7"/><rect x="13.5" y="13.5" width="9.5" height="9.5" rx="1.5" fill="#d9534f"/><path d="M15.5 15.5 L21.0 21.0 M21.0 15.5 L15.5 21.0" stroke="#fff" stroke-width="1.8"/></svg>
<svg style="left:1314px;top:139px;" width="24" height="24" viewBox="0 0 24 24"><path d="M2 6 C2 2 8 1.5 12 3 C16 4 22 2 22.5 7 C23 11 17 11.5 14 12 C11 13 10 17 7 21 C4 22 4 15 2 6Z" fill="#88b77b" stroke="#555" stroke-width="0.7"/><path d="M3 9 C5 12 8 10 10 13 C9 16 8 19 6.5 21 C4.5 21 4 15 3 9Z" fill="#d4b03a"/></svg>
<svg style="left:1347px;top:139px;" width="24" height="24" viewBox="0 0 24 24"><path d="M3 18 C1 14 4 10 8 7 C12 3 17 0.5 21 2.5 C24 4.5 22 9 18 12 C14 15 11 20 6 21 C4.5 21 3.5 19.5 3 18Z" fill="#d4b03a" stroke="#555" stroke-width="0.7"/><path d="M5.5 17 C4.5 14 7 11 10 8.5 C13 5 17 3 19.5 4.5 C21.5 6 20 9 16.5 11.5 C13 14 11 18 7.5 18.5 C6.5 18.5 6 18 5.5 17Z" fill="#88b77b"/></svg>
<svg style="left:1380px;top:139px;" width="24" height="24" viewBox="0 0 24 24"><path d="M3 2 L10 16 L15 4 L21 4" stroke="#bbb" stroke-width="1" fill="none"/><rect x="1.5" y="0.5" width="3" height="3" fill="#fff" stroke="#bbb" stroke-width="0.7"/><rect x="8.5" y="14.5" width="3" height="3" fill="#fff" stroke="#bbb" stroke-width="0.7"/><rect x="13.5" y="2.5" width="3" height="3" fill="#fff" stroke="#bbb" stroke-width="0.7"/><rect x="19.5" y="2.5" width="3" height="3" fill="#fff" stroke="#bbb" stroke-width="0.7"/><rect x="12.5" y="12.5" width="10" height="10" rx="1.5" fill="#e4e4e4" stroke="#ccc" stroke-width="0.6"/><circle cx="17.5" cy="17.5" r="2.8" fill="none" stroke="#fff" stroke-width="1.3"/></svg>
<svg style="left:1413px;top:139px;" width="24" height="24" viewBox="0 0 24 24"><path d="M10 1 V23 M15 3 V23" stroke="#4a8a4a" stroke-width="1.2"/><path d="M0 11.5 H24" stroke="#aaa" stroke-width="1.2"/><circle cx="10" cy="11.5" r="1.6" fill="#fff" stroke="#333" stroke-width="0.8"/><rect x="13.5" y="10" width="3" height="3" fill="#fff" stroke="#333" stroke-width="0.8"/><path d="M10 13 V19" stroke="#e05050" stroke-width="1.2"/><rect x="16" y="1.5" width="7" height="7" rx="1.26" fill="#c9a20c"/><polygon points="19.50,2.20 20.20,3.79 21.92,3.60 20.90,5.00 21.92,6.40 20.20,6.21 19.50,7.80 18.80,6.21 17.08,6.40 18.10,5.00 17.08,3.60 18.80,3.79" fill="#fff"/><circle cx="19.5" cy="5.0" r="0.63" fill="#c9a20c"/><rect x="0.5" y="17" width="6.5" height="6.5" rx="1.5" fill="#d9534f"/><path d="M2.5 19 L5.0 21.5 M5.0 19 L2.5 21.5" stroke="#fff" stroke-width="1.8"/></svg>
<svg style="left:1446px;top:139px;" width="24" height="24" viewBox="0 0 24 24"><path d="M1 6 C1 2 5 0.5 9 1.5 L10 13 C6 13 1 11 1 6Z" fill="#bdbdbd" stroke="#555" stroke-width="0.7"/><path d="M13 1.5 C18 1 22 3 22 7 C22 11 18 12 14 12Z" fill="#88b77b" stroke="#555" stroke-width="0.7"/><path d="M10 2 L14 17 M14 2 L10 17" stroke="#888" stroke-width="1"/><circle cx="8" cy="19.5" r="3" fill="none" stroke="#c1121f" stroke-width="1.6"/><circle cx="16" cy="19.5" r="3" fill="none" stroke="#c1121f" stroke-width="1.6"/></svg>
<svg style="left:1479px;top:139px;" width="24" height="24" viewBox="0 0 24 24"><path d="M1 6 C1 2 5 0.5 9 1.5 L10 13 C6 13 1 11 1 6Z" fill="#e0e0e0" stroke="#ccc" stroke-width="0.7"/><path d="M13 1.5 C18 1 22 3 22 7 C22 11 18 12 14 12Z" fill="#e0e0e0" stroke="#ccc" stroke-width="0.7"/><path d="M10 2 L14 17 M14 2 L10 17" stroke="#ccc" stroke-width="1"/><circle cx="8" cy="19.5" r="3" fill="none" stroke="#e8c4c4" stroke-width="1.4"/><circle cx="16" cy="19.5" r="3" fill="none" stroke="#e8c4c4" stroke-width="1.4"/></svg>
<svg style="left:1512px;top:139px;" width="24" height="24" viewBox="0 0 24 24"><path d="M1 6 C1 2 5 0.5 9 1.5 L10 12 C6 12 1 10 1 6Z M14 1.5 C18 1 23 3 23 7 C23 11 18 12 14 12Z" fill="#e0e0e0" stroke="#ccc" stroke-width="0.7"/><path d="M9 5 H14 M9 7 H14 M9 9 H14" stroke="#ccc" stroke-width="0.8"/><path d="M6 12 C7 16 10 18 12 21" stroke="#ccc" stroke-width="1" fill="none"/></svg>
<svg style="left:1545px;top:139px;" width="24" height="24" viewBox="0 0 24 24"><path d="M1 2 H21 M1 8 H21 M1 14 H21 M1 20 H21" stroke="#d4d4d4" stroke-width="1"/><path d="M11 2 V20 M7 5 H15 M7 11 H15 M7 17 H15" stroke="#d8d8d8" stroke-width="0.8"/></svg>
<svg style="left:1577px;top:139px;" width="24" height="24" viewBox="0 0 24 24"><path d="M8 6 A8 8 0 0 0 6 18" stroke="#ccc" stroke-width="1" fill="none"/><path d="M12 2 L20 6 L12 10Z" fill="#e4e4e4" stroke="#ccc" stroke-width="0.7"/><path d="M12 2 V22 M7 22 H17 L12 12Z" stroke="#ccc" stroke-width="0.8" fill="none"/></svg>
<svg style="left:1036px;top:149px" width="9" height="5"><path d="M0.5 0.5 H8.5 L4.5 4.5Z" fill="#7b7e80"/></svg>
<svg style="left:1608px;top:149px" width="9" height="5"><path d="M0.5 0.5 H8.5 L4.5 4.5Z" fill="#7b7e80"/></svg>
<div class="t" style="left:65px;top:173px;">Browser</div>
<svg style="left:69px;top:199px;" width="16" height="16" viewBox="0 0 16 16"><rect x="1.5" y="1.5" width="10" height="10" fill="#efefef" stroke="#888" stroke-width="0.9"/><circle cx="12" cy="12" r="3.2" fill="#5a9a5a"/><circle cx="12" cy="12" r="1.7" fill="#d5ead5"/></svg>
<svg style="left:93px;top:199px;" width="16" height="16" viewBox="0 0 16 16"><path d="M1.5 8 A6.5 6 0 0 1 12.3 3.2 L14 1.5 L14.5 7 L9 6.7 L10.7 5 A4 3.6 0 0 0 4.6 7.7Z" fill="#4a86c8"/><path d="M14.5 8 A6.5 6 0 0 1 3.7 12.8 L2 14.5 L1.5 9 L7 9.3 L5.3 11 A4 3.6 0 0 0 11.4 8.3Z" fill="#3d78bd"/></svg>
<svg style="left:118px;top:199px;" width="16" height="16" viewBox="0 0 16 16"><path d="M1 1.5 H14 V3.5 L9.5 8.5 V15 L6.5 13 V8.5 L1 3.5Z" fill="#6b9bd1" stroke="#4a7ab5" stroke-width="0.6"/><rect x="1.5" y="1.8" width="12" height="1.5" fill="#fbe44a"/></svg>
<svg style="left:144px;top:199px;" width="16" height="16" viewBox="0 0 16 16"><path d="M1.5 2 H5 M2 2 V15 M2 8.5 H5 M2 14.5 H5" stroke="#aaa" stroke-width="0.8"/><rect x="4" y="6.5" width="3" height="3" fill="#f08020"/><rect x="4" y="12.5" width="3" height="3" fill="#f08020"/><path d="M11 15 V7 H8 L11.5 1.5 L15 7 H12.5 V15Z" fill="#5b8fd0" stroke="#3a6aa5" stroke-width="0.5"/></svg>
<div class="a" style="left:60px;top:223px;width:303px;height:389px;background:#fff;border-top:1px solid #c0bebb;border-right:1px solid #b8b6b3;border-bottom:1px solid #c0bebb"></div>
<div class="a" style="left:61px;top:224px;width:301px;height:387px;overflow:hidden">
<div class="t" style="left:41px;top:2px;">Favorites</div>
<svg style="left:19px;top:3px;" width="16" height="16" viewBox="0 0 16 16"><path d="M8 0.8 L10.1 5.5 L15.2 5.9 L11.3 9.2 L12.5 14.3 L8 11.6 L3.5 14.3 L4.7 9.2 L0.8 5.9 L5.9 5.5Z" fill="#fef26a" stroke="#d9b21b" stroke-width="0.9"/></svg>
<div class="t" style="left:41px;top:23px;">Spatial Bookmarks</div>
<svg style="left:19px;top:24px;" width="16" height="16" viewBox="0 0 16 16"><path d="M1.5 2 Q1.5 1 2.5 1 H4 V1.5 H14.5 V14.5 H4 Q1.5 14.5 1.5 13Z" fill="#e2e2e2" stroke="#aaa" stroke-width="0.7"/><path d="M8 1 H11 V6.5 L9.5 5.5 L8 6.5Z" fill="#6b9bd1" stroke="#3c5f8a" stroke-width="0.5"/></svg>
<svg style="left:5px;top:27px" width="6" height="10"><path d="M0.5 0.5 L5.5 5 L0.5 9.5Z" fill="#7b7e80"/></svg>
<div class="t" style="left:41px;top:44px;">Home</div>
<svg style="left:19px;top:45px;" width="16" height="16" viewBox="0 0 16 16"><path d="M1 2.5 H6 L7.5 4 H15 V14 H1Z" fill="#efefef" stroke="#888" stroke-width="0.8"/><path d="M4.5 9 L8 6 L11.5 9 M5.5 8.5 V12 H10.5 V8.5" stroke="#222" stroke-width="0.9" fill="none"/></svg>
<svg style="left:5px;top:48px" width="6" height="10"><path d="M0.5 0.5 L5.5 5 L0.5 9.5Z" fill="#7b7e80"/></svg>
<div class="t" style="left:41px;top:65px;">/</div>
<svg style="left:19px;top:66px;" width="16" height="16" viewBox="0 0 16 16"><path d="M1 2.5 H6 L7.5 4 H15 V14 H1Z" fill="#efefef" stroke="#888" stroke-width="0.8"/></svg>
<svg style="left:5px;top:69px" width="6" height="10"><path d="M0.5 0.5 L5.5 5 L0.5 9.5Z" fill="#7b7e80"/></svg>
<div class="t" style="left:41px;top:86px;">GeoPackage</div>
<svg style="left:19px;top:87px;" width="16" height="16" viewBox="0 0 16 16"><path d="M1 6 L8 10 L8 15.5 L1 11.5Z" fill="#d9a800" stroke="#333" stroke-width="0.5"/><path d="M8 10 L15 6 L15 11.5 L8 15.5Z" fill="#fbf06a" stroke="#333" stroke-width="0.5"/><circle cx="8" cy="5.5" r="4.5" fill="#8db4e0" stroke="#5780b0" stroke-width="0.5"/><path d="M5.5 4 Q7 3 8 4.5 T10.5 6" stroke="#2e5a8a" stroke-width="1.2" fill="none"/></svg>
<svg style="left:5px;top:90px" width="6" height="10"><path d="M0.5 0.5 L5.5 5 L0.5 9.5Z" fill="#7b7e80"/></svg>
<div class="t" style="left:41px;top:107px;">SpatiaLite</div>
<svg style="left:19px;top:108px;" width="16" height="16" viewBox="0 0 16 16"><path d="M1.5 15 C4 9 8 4 15 1 C14 5 11 10 5 12 C4 13 2.5 14.5 1.5 15Z" fill="#9cc0e6" stroke="#4a7ab5" stroke-width="0.7"/><path d="M1.5 15 L13 3" stroke="#4a7ab5" stroke-width="0.6"/></svg>
<svg style="left:3px;top:113px" width="10" height="6"><path d="M0.5 0.5 H9.5 L5 5.5Z" fill="#7b7e80"/></svg>
<div class="t" style="left:57px;top:128px;">test.db</div>
<svg style="left:35px;top:129px;" width="16" height="16" viewBox="0 0 16 16"><path d="M2 3.5 V12.5 A6 2.5 0 0 0 14 12.5 V3.5" fill="#f0f0f0" stroke="#888" stroke-width="0.8"/><ellipse cx="8" cy="3.5" rx="6" ry="2.5" fill="#f8f8f8" stroke="#888" stroke-width="0.8"/><path d="M2 8 A6 2.5 0 0 0 14 8" stroke="#888" stroke-width="0.8" fill="none"/></svg>
<svg style="left:21px;top:132px" width="6" height="10"><path d="M0.5 0.5 L5.5 5 L0.5 9.5Z" fill="#7b7e80"/></svg>
<div class="t" style="left:57px;top:149px;">tutorial.sqlite</div>
<svg style="left:35px;top:150px;" width="16" height="16" viewBox="0 0 16 16"><path d="M2 3.5 V12.5 A6 2.5 0 0 0 14 12.5 V3.5" fill="#f0f0f0" stroke="#888" stroke-width="0.8"/><ellipse cx="8" cy="3.5" rx="6" ry="2.5" fill="#f8f8f8" stroke="#888" stroke-width="0.8"/><path d="M2 8 A6 2.5 0 0 0 14 8" stroke="#888" stroke-width="0.8" fill="none"/></svg>
<svg style="left:19px;top:155px" width="10" height="6"><path d="M0.5 0.5 H9.5 L5 5.5Z" fill="#7b7e80"/></svg>
<div class="t" style="left:73px;top:170px;">data_licenses</div>
<svg style="left:51px;top:171px;" width="16" height="16" viewBox="0 0 16 16"><rect x="1.5" y="1" width="13" height="14" fill="#f4f4f4" stroke="#888" stroke-width="0.8"/><path d="M1.5 4.5 H14.5 M1.5 8 H14.5 M1.5 11.5 H14.5 M5.5 1 V15" stroke="#888" stroke-width="0.8"/></svg>
<div class="t" style="left:73px;top:191px;">KNN</div>
<svg style="left:51px;top:192px;" width="16" height="16" viewBox="0 0 16 16"><rect x="1.5" y="1" width="13" height="14" fill="#f4f4f4" stroke="#888" stroke-width="0.8"/><path d="M1.5 4.5 H14.5 M1.5 8 H14.5 M1.5 11.5 H14.5 M5.5 1 V15" stroke="#888" stroke-width="0.8"/></svg>
<div class="a" style="left:0px;top:210px;width:301px;height:21px;background:#3584e4"></div>
<div class="t" style="left:73px;top:212px;color:#ffffff;">tutorial</div>
<svg style="left:51px;top:213px;" width="16" height="16" viewBox="0 0 16 16"><path d="M1 5 C1 2 4 1.5 7 3 C10 1.5 15 2 15 6 C15 9 12 9 10 10 C7 12 2 11 1 5Z" fill="#f4f4f4" stroke="#555" stroke-width="0.8"/></svg>
<svg style="left:37px;top:216px" width="6" height="10"><path d="M0.5 0.5 L5.5 5 L0.5 9.5Z" fill="#ffffff"/></svg>
<div class="t" style="left:41px;top:233px;">PostgreSQL</div>
<svg style="left:19px;top:234px;" width="16" height="16" viewBox="0 0 16 16"><path d="M3 3 C3 0.5 9 0.5 10 2 C12 0.5 15 2 14 6 C13.5 9 12 9 11 8 L11 13 C11 15 8.5 15 8.5 13 V11 L7 11 C6 14 4 15 3.5 12 C3 10 3 6 3 3Z" fill="#336791" stroke="#1a3a5a" stroke-width="0.6"/><path d="M5 4 C6 6 7 8 6 10" stroke="#fff" stroke-width="0.9" fill="none"/></svg>
<div class="t" style="left:41px;top:254px;">MS SQL Server</div>
<svg style="left:19px;top:255px;" width="16" height="16" viewBox="0 0 16 16"><path d="M1 2 C6 2 12 5 15 9 C11 8 6 9 3 14 C3 10 2 6 1 2Z" fill="#4a7ab5" stroke="#2a4a7a" stroke-width="0.5"/><path d="M3 5 C7 6 10 7 13 8.5 M3 9 C6 9 9 8.5 13 8.5" stroke="#cfe0f2" stroke-width="0.6" fill="none"/></svg>
<div class="t" style="left:41px;top:275px;">WMS/WMTS</div>
<svg style="left:19px;top:276px;" width="16" height="16" viewBox="0 0 16 16"><circle cx="8" cy="8" r="6.5" fill="#8db4e0" stroke="#3a6aa5" stroke-width="0.9"/><path d="M4 5 Q6 3 8 5 Q10 7 12 5 M5 9 Q7 8 8 11 Q9 13 11 11" stroke="#2e5a8a" stroke-width="1.5" fill="none"/></svg>
<svg style="left:5px;top:279px" width="6" height="10"><path d="M0.5 0.5 L5.5 5 L0.5 9.5Z" fill="#7b7e80"/></svg>
<div class="t" style="left:41px;top:296px;">Vector Tiles</div>
<svg style="left:19px;top:297px;" width="16" height="16" viewBox="0 0 16 16"><rect x="1" y="1" width="14" height="14" fill="#fff" stroke="#3a5a7a" stroke-width="1"/><path d="M1 5.7 H15 M1 10.3 H15 M5.7 1 V15 M10.3 1 V15" stroke="#3a5a7a" stroke-width="1"/></svg>
<div class="t" style="left:41px;top:317px;">XYZ Tiles</div>
<svg style="left:19px;top:318px;" width="16" height="16" viewBox="0 0 16 16"><g fill="#3a6aa5"><rect x="1" y="1" width="4" height="4"/><rect x="1" y="6" width="4" height="4"/><rect x="1" y="11" width="4" height="4"/><rect x="6" y="1" width="4" height="4"/><rect x="6" y="6" width="4" height="4"/><rect x="6" y="11" width="4" height="4"/><rect x="11" y="1" width="4" height="4"/><rect x="11" y="6" width="4" height="4"/><rect x="11" y="11" width="4" height="4"/></g></svg>
<svg style="left:5px;top:321px" width="6" height="10"><path d="M0.5 0.5 L5.5 5 L0.5 9.5Z" fill="#7b7e80"/></svg>
<div class="t" style="left:41px;top:338px;">WCS</div>
<svg style="left:19px;top:339px;" width="16" height="16" viewBox="0 0 16 16"><circle cx="8" cy="8" r="7" fill="#3a6aa5"/><path d="M1 8 H15 M2 4.5 H14 M2 11.5 H14" stroke="#fff" stroke-width="0.8"/><ellipse cx="8" cy="8" rx="3.5" ry="7" fill="none" stroke="#fff" stroke-width="0.8"/></svg>
<div class="t" style="left:41px;top:359px;">WFS / OGC API - Features</div>
<svg style="left:19px;top:360px;" width="16" height="16" viewBox="0 0 16 16"><circle cx="8" cy="8" r="7" fill="#f0f5fb" stroke="#6b9bd1" stroke-width="0.9"/><path d="M1.5 8 H14.5 M2.5 4.5 H13.5 M2.5 11.5 H13.5" stroke="#9cc0e6" stroke-width="0.6"/><path d="M4.5 4 L8 12 L11.5 4" stroke="#333" stroke-width="1.1" fill="none"/></svg>
<div class="t" style="left:41px;top:380px;">ArcGIS REST Servers</div>
<svg style="left:19px;top:381px;" width="16" height="16" viewBox="0 0 16 16"><circle cx="8" cy="8" r="7" fill="#dce8f5" stroke="#4a7ab5" stroke-width="0.9"/><path d="M1 8 H15 M8 1 V15 M2.5 4.5 H13.5 M2.5 11.5 H13.5" stroke="#4a7ab5" stroke-width="0.7"/><ellipse cx="8" cy="8" rx="3.5" ry="7" fill="none" stroke="#4a7ab5" stroke-width="0.7"/></svg>
</div>
<div class="t" style="left:65px;top:620px;">Layers</div>
<svg style="left:68px;top:647px;" width="16" height="16" viewBox="0 0 16 16"><path d="M1 8 L6 6 L9 12 L4 14Z" fill="#e03030"/><path d="M2 6 L7 4 L9.5 9 L4.5 11Z" fill="#f0c030"/><path d="M3 4 L7 2.5 L9 7 L5 8.5Z" fill="#5b8fd0"/><path d="M5 9 L10 6.5 L12 11 L7 13.5Z" fill="#d9a860" stroke="#a07030" stroke-width="0.5"/><path d="M10 7.5 L15 2" stroke="#d9a030" stroke-width="1.6"/></svg>
<svg style="left:94px;top:647px;" width="16" height="16" viewBox="0 0 16 16"><path d="M1 5 V15 H10" stroke="#888" stroke-width="0.9" fill="none"/><rect x="3.5" y="2.5" width="9" height="10.5" fill="#f0f0f0" stroke="#888" stroke-width="0.9"/><path d="M7 0.5 V8 C7 9.5 9 9.5 9 8 V3" stroke="#4a7ab5" stroke-width="1" fill="none"/><circle cx="12" cy="12.5" r="3.3" fill="#5a9a5a"/><circle cx="12" cy="12.5" r="1.6" fill="#dcefdc"/></svg>
<svg style="left:118px;top:647px;" width="16" height="16" viewBox="0 0 16 16"><path d="M0.5 7.5 Q8 0 15.5 7.5 Q8 15 0.5 7.5Z" fill="#f4f4f4" stroke="#999" stroke-width="0.8"/><circle cx="7.5" cy="7" r="3.3" fill="#5b8fd0"/><circle cx="7.5" cy="6.5" r="1.3" fill="#111"/><path d="M11 11.5 H16 L13.5 14Z" fill="#777"/></svg>
<svg style="left:144px;top:647px;" width="16" height="16" viewBox="0 0 16 16"><path d="M1 1.5 H14 V3.5 L9.5 8.5 V15 L6.5 13 V8.5 L1 3.5Z" fill="#6b9bd1" stroke="#4a7ab5" stroke-width="0.6"/><rect x="1.5" y="1.8" width="12" height="1.5" fill="#fbe44a"/><path d="M10.5 12 H15.5 L13 14.5Z" fill="#777"/></svg>
<div class="a" style="left:60px;top:670px;width:303px;height:377px;background:#fff;border-top:1px solid #c0bebb;border-right:1px solid #b8b6b3;border-bottom:1px solid #b8b6b3"></div>
<div class="a" style="left:61px;top:671px;width:301px;height:21px;background:#3584e4"></div>
<div class="a" style="left:84px;top:674px;width:14px;height:14px;background:#fff;border:1px solid #c4c0bc"></div>
<svg style="left:84px;top:674px" width="14" height="14"><path d="M3.5 7.2 L6 11.5 L10.5 2.8" stroke="#1e1e1e" stroke-width="1.7" fill="none"/></svg>
<svg style="left:104px;top:673px;" width="16" height="16" viewBox="0 0 16 16"><rect x="0.5" y="0.5" width="15" height="15" fill="#8b4a2a" stroke="#5a3018" stroke-width="0.8"/><path d="M4 13 L12 2 L14 3.5 L6 14.5 L3.5 15Z" fill="#f0d040" stroke="#8a7010" stroke-width="0.5"/></svg>
<div class="t" style="left:127px;top:673px;color:#ffffff;font-weight:bold;text-decoration:underline;text-underline-offset:3px">tutorial_data</div>
<div class="a" style="left:369px;top:171px;width:1551px;height:876px;background:#fff;border:1px solid #b4b2af;border-right-color:#d0cecb"></div>
<div class="a" style="left:64px;top:1050px;width:268px;height:27px;background:#fff;border:1px solid #b8b6b3;border-radius:3px"></div>
<div class="t" style="left:93px;top:1055px;">Type to locate (Ctrl+K)</div>
<div class="t" style="left:1048px;top:1055px;font-size:12px;">Coordinate</div>
<div class="a" style="left:1112px;top:1052px;width:103px;height:24px;background:#fff;border:1px solid #b8b6b3;border-radius:3px"></div>
<div class="t" style="left:1121px;top:1055px;font-size:12px;">66880 5455152</div>
<div class="t" style="left:1248px;top:1055px;font-size:12px;">Scale</div>
<div class="a" style="left:1279px;top:1050px;width:97px;height:27px;background:#fff;border:1px solid #b8b6b3;border-radius:3px"></div>
<div class="a" style="left:1355px;top:1051px;width:1px;height:25px;background:#c8c6c3"></div>
<div class="t" style="left:1284px;top:1055px;font-size:12px;">1:983566</div>
<div class="t" style="left:1409px;top:1055px;font-size:12px;">Magnifier</div>
<div class="a" style="left:1464px;top:1051px;width:94px;height:26px;background:#fff;border:1px solid #b8b6b3;border-radius:3px"></div>
<div class="a" style="left:1543px;top:1052px;width:1px;height:24px;background:#c8c6c3"></div>
<div class="t" style="left:1469px;top:1055px;font-size:12px;">100%</div>
<div class="t" style="left:1567px;top:1055px;font-size:12px;">Rotation</div>
<div class="a" style="left:1623px;top:1051px;width:94px;height:25px;background:#fff;border:1px solid #b8b6b3;border-radius:3px"></div>
<div class="a" style="left:1702px;top:1052px;width:1px;height:23px;background:#c8c6c3"></div>
<div class="t" style="left:1628px;top:1055px;font-size:12px;">0,0 °</div>
<div class="a" style="left:1723px;top:1057px;width:14px;height:14px;background:#fff;border:1px solid #b8b6b3"></div>
<div class="t" style="left:1742px;top:1055px;font-size:12px;">Render</div>
<svg style="left:1723px;top:1057px" width="14" height="14"><path d="M3.5 7.2 L6 11.5 L10.5 2.8" stroke="#1e1e1e" stroke-width="1.7" fill="none"/></svg>
<svg style="left:1218px;top:1054px;" width="17" height="18" viewBox="0 0 17 18"><path d="M3 3 C5 0.5 9 1 11 4 L13 8 C14 11 12 14 9 15 C6 16 3 14 2.5 11Z" fill="#777" stroke="#222" stroke-width="1"/><path d="M5 3.5 L8 9" stroke="#fff" stroke-width="0.9"/><circle cx="10" cy="13" r="2.5" fill="#ddd" stroke="#333" stroke-width="0.8"/><path d="M14 3 L16 1 M1 12 L3 13" stroke="#444" stroke-width="0.8"/><path d="M7 16 C9 17 12 16 13 15" stroke="#b05050" stroke-width="1" fill="none"/></svg>
<svg style="left:1360px;top:1063px" width="9" height="5"><path d="M0.5 0.5 H8.5 L4.5 4.5Z" fill="#6a6d70"/></svg>
<svg style="left:1387px;top:1055px;" width="14" height="17" viewBox="0 0 14 17"><path d="M3.5 8 V5.5 A3.5 3.5 0 0 1 10.5 5.5 V8" stroke="#666" stroke-width="1.6" fill="none"/><rect x="1.5" y="8" width="11" height="8" rx="1.5" fill="#666"/></svg>
<svg style="left:1545px;top:1056px;" width="10" height="16" viewBox="0 0 10 16"><path d="M1 5 L5 1 L9 5Z M1 11 L5 15 L9 11Z" fill="#7a7d80"/></svg>
<svg style="left:1704px;top:1056px;" width="10" height="16" viewBox="0 0 10 16"><path d="M1 5 L5 1 L9 5Z M1 11 L5 15 L9 11Z" fill="#7a7d80"/></svg>
<svg style="left:1797px;top:1056px;" width="16" height="16" viewBox="0 0 16 16"><path d="M8 0.8 L14.8 5 L12.5 13.5 L8 15.2 L3.5 13.5 L1.2 5Z" fill="none" stroke="#555" stroke-width="1"/><path d="M1.5 8 H14.5 M3 4.5 H13 M3.5 11.5 H12.5 M8 1 V15" stroke="#555" stroke-width="0.8"/><ellipse cx="8" cy="8" rx="3.5" ry="7" fill="none" stroke="#555" stroke-width="0.8"/></svg>
<svg style="left:1897px;top:1056px;" width="17" height="17" viewBox="0 0 17 17"><path d="M8.5 1 C13 1 16.5 3.8 16.5 7.5 C16.5 11 13 14 8.5 14 C7.5 14 6.5 13.8 5.5 13.5 L2 15.5 L3 12 C1.5 10.8 0.5 9.2 0.5 7.5 C0.5 3.8 4 1 8.5 1Z" fill="#555"/><circle cx="5" cy="7.5" r="1.3" fill="#fff"/><circle cx="8.5" cy="7.5" r="1.3" fill="#fff"/><circle cx="12" cy="7.5" r="1.3" fill="#fff"/></svg>
<svg style="left:71px;top:1055px;" width="13" height="13" viewBox="0 0 13 13"><circle cx="5.5" cy="5.5" r="4" fill="none" stroke="#777" stroke-width="1.3"/><path d="M8.5 8.5 L12 12" stroke="#777" stroke-width="1.5"/></svg>
<div class="t" style="left:1815px;top:1055px;font-size:12px;">EPSG:6875</div>
<div class="a" style="left:170px;top:93px;width:425px;height:793px;background:#fff;border:1px solid #a4a4a4"></div>
<div class="t" style="left:198px;top:98px;">New <u>M</u>ap View</div>
<svg style="left:178px;top:99px;" width="16" height="16" viewBox="0 0 16 16"><path d="M2 2 Q2 1 3 1 H4.5 V1.5 H13 V13 H4.5 Q2 13 2 12Z" fill="#e0e0e0" stroke="#aaa" stroke-width="0.7"/><path d="M3 1 Q4.5 1 4.5 2 V11.5" stroke="#aaa" stroke-width="0.7" fill="none"/><rect x="8.8" y="8.8" width="7" height="7" rx="1.26" fill="#c9a20c"/><polygon points="12.30,9.50 13.00,11.09 14.72,10.90 13.70,12.30 14.72,13.70 13.00,13.51 12.30,15.10 11.60,13.51 9.88,13.70 10.90,12.30 9.88,10.90 11.60,11.09" fill="#fff"/><circle cx="12.3" cy="12.3" r="0.63" fill="#c9a20c"/></svg>
<div class="t" style="left:483px;top:98px;">Ctrl+M</div>
<div class="t" style="left:198px;top:125px;"><u>3</u>D Map Views</div>
<svg style="left:584px;top:129px" width="5" height="9"><path d="M0 0 L5 4.5 L0 9Z" fill="#7a7c7d"/></svg>
<div class="t" style="left:198px;top:152px;">Pan Map</div>
<svg style="left:178px;top:153px;" width="16" height="16" viewBox="0 0 16 16"><path d="M5 15 C3 13 1.5 10 2 9 C2.5 8 4 9 5 10.5 V3 C5 2 6.5 2 6.5 3 V8 V2 C6.5 1 8 1 8 2 V8 V2.5 C8 1.5 9.5 1.5 9.5 2.5 V8 V3.5 C9.5 2.5 11 2.5 11 3.5 V10 C11 13 10 14 9.5 15Z" fill="#fff" stroke="#333" stroke-width="0.9" stroke-linejoin="round"/></svg>
<div class="t" style="left:198px;top:179px;">Pan Map to Selection</div>
<svg style="left:178px;top:180px;" width="16" height="16" viewBox="0 0 16 16"><rect x="1" y="1" width="11" height="11" fill="#fde34e" stroke="#c4a000" stroke-width="0.7"/><g fill="#5b8fd0"><path d="M8 0 L11 3 H5Z M8 16 L11 13 H5Z M0 8 L3 5 V11Z M16 8 L13 5 V11Z"/><rect x="7" y="2.5" width="2" height="11"/><rect x="2.5" y="7" width="11" height="2"/></g></svg>
<div class="t" style="left:198px;top:206px;">Zoom In</div>
<svg style="left:178px;top:207px;" width="16" height="16" viewBox="0 0 16 16"><path d="M1.5 14.5 L5.5 10.5" stroke="#333" stroke-width="2.6" stroke-linecap="round"/><path d="M1.8 14.2 L5.2 10.8" stroke="#e0b020" stroke-width="1.5" stroke-linecap="round"/><circle cx="9.5" cy="6.5" r="5" fill="#f0f0f0" stroke="#555" stroke-width="1"/><circle cx="9.5" cy="6.5" r="3.6" fill="#6b9bd1"/><path d="M9.5 4.3 V8.7 M7.3 6.5 H11.7" stroke="#fff" stroke-width="1.4"/></svg>
<div class="t" style="left:483px;top:206px;">Ctrl+Alt++</div>
<div class="t" style="left:198px;top:233px;">Zoom Out</div>
<svg style="left:178px;top:234px;" width="16" height="16" viewBox="0 0 16 16"><path d="M1.5 14.5 L5.5 10.5" stroke="#333" stroke-width="2.6" stroke-linecap="round"/><path d="M1.8 14.2 L5.2 10.8" stroke="#e0b020" stroke-width="1.5" stroke-linecap="round"/><circle cx="9.5" cy="6.5" r="5" fill="#f0f0f0" stroke="#555" stroke-width="1"/><circle cx="9.5" cy="6.5" r="3.6" fill="#6b9bd1"/><path d="M7.3 6.5 H11.7" stroke="#fff" stroke-width="1.5"/></svg>
<div class="t" style="left:483px;top:233px;">Ctrl+Alt+-</div>
<div class="a" style="left:176px;top:255px;width:414px;height:1px;background:#d4d4d4"></div>
<div class="t" style="left:198px;top:262px;">Identify Features</div>
<svg style="left:178px;top:263px;" width="16" height="16" viewBox="0 0 16 16"><circle cx="6.5" cy="6.5" r="6" fill="#5b8fd0"/><path d="M6 5.3 H7.5 L6.8 10 H5.5Z M6.2 2.6 h1.5 v1.5 h-1.5z" fill="#fff"/><path transform="translate(8 7) scale(0.7)" d="M0 0 L0 11 L3 8.5 L5.5 13 L7.5 12 L5.2 7.6 L9 7.4 Z" fill="#fff" stroke="#333" stroke-width="0.9" stroke-linejoin="round"/></svg>
<div class="t" style="left:483px;top:262px;">Ctrl+Shift+I</div>
<div class="t" style="left:198px;top:289px;">Measure</div>
<svg style="left:584px;top:293px" width="5" height="9"><path d="M0 0 L5 4.5 L0 9Z" fill="#7a7c7d"/></svg>
<div class="t" style="left:198px;top:316px;">Statistical Summary</div>
<svg style="left:178px;top:317px;" width="16" height="16" viewBox="0 0 16 16"><path d="M2.5 1 H13 L13.5 4 H12 L11.5 3 H6 L9.8 8 L5.6 13 H11.5 L12.3 11.8 H13.8 L13 15 H2 V14.2 L7 8 L2.5 2Z" fill="#a0109f"/></svg>
<div class="t" style="left:198px;top:343px;">Elevation Profile</div>
<svg style="left:178px;top:344px;" width="16" height="16" viewBox="0 0 16 16"><path d="M1 12 L4 4 L15 3.5 L15 11 L6 13Z" fill="#e6e6e6" stroke="#aaa" stroke-width="0.7"/><path d="M3 8 L15 7 M7 4 L8 13 M11 3.7 L11.5 12" stroke="#bbb" stroke-width="0.6"/></svg>
<div class="a" style="left:176px;top:365px;width:414px;height:1px;background:#d4d4d4"></div>
<div class="t" style="left:198px;top:372px;">Zoom <u>F</u>ull</div>
<svg style="left:178px;top:373px;" width="16" height="16" viewBox="0 0 16 16"><rect x="4" y="1" width="11" height="11" fill="#e6e6e6" stroke="#aaa" stroke-width="0.5"/><g fill="#5b8fd0"><path d="M4 1 H9 L4 6Z M15 1 H10 L15 6Z M4 12 H9 L4 7Z M15 12 H10 L15 7Z"/></g><path d="M1 15 L5 11" stroke="#333" stroke-width="2.4" stroke-linecap="round"/><path d="M1.3 14.7 L4.7 11.3" stroke="#e0b020" stroke-width="1.3" stroke-linecap="round"/></svg>
<div class="t" style="left:483px;top:372px;">Ctrl+Shift+F</div>
<div class="t" style="left:198px;top:399px;">Zoom to <u>S</u>election</div>
<svg style="left:178px;top:400px;" width="16" height="16" viewBox="0 0 16 16"><rect x="1.5" y="2" width="6" height="8" fill="#fde34e" stroke="#c4a000" stroke-width="0.6"/><path d="M1.5 14.5 L5.5 10.5" stroke="#333" stroke-width="2.6" stroke-linecap="round"/><path d="M1.8 14.2 L5.2 10.8" stroke="#e0b020" stroke-width="1.5" stroke-linecap="round"/><circle cx="9.5" cy="6.5" r="5" fill="#f2f0e0" stroke="#555" stroke-width="1"/></svg>
<div class="t" style="left:483px;top:399px;">Ctrl+J</div>
<div class="t" style="left:198px;top:426px;">Zoom to <u>L</u>ayer(s)</div>
<svg style="left:178px;top:427px;" width="16" height="16" viewBox="0 0 16 16"><rect x="1.5" y="2" width="6" height="8" fill="#e8e8e8" stroke="#aaa" stroke-width="0.6"/><path d="M1.5 14.5 L5.5 10.5" stroke="#333" stroke-width="2.6" stroke-linecap="round"/><path d="M1.8 14.2 L5.2 10.8" stroke="#e0b020" stroke-width="1.5" stroke-linecap="round"/><circle cx="9.5" cy="6.5" r="5" fill="#eeeeee" stroke="#555" stroke-width="1"/></svg>
<div class="t" style="left:198px;top:453px;color:#a4a6a7;">Zoom to Native Resolution (100%)</div>
<svg style="left:178px;top:454px;" width="16" height="16" viewBox="0 0 16 16"><g opacity="0.35"><rect x="1.5" y="2" width="6" height="8" fill="#e8e8e8" stroke="#aaa" stroke-width="0.6"/><path d="M1.5 14.5 L5.5 10.5" stroke="#333" stroke-width="2.6" stroke-linecap="round"/><path d="M1.8 14.2 L5.2 10.8" stroke="#ddd" stroke-width="1.5" stroke-linecap="round"/><circle cx="9.5" cy="6.5" r="5" fill="#f4f4f4" stroke="#999" stroke-width="1"/><text x="6.3" y="8.5" font-size="5" fill="#666" font-family="Liberation Sans">1:1</text></g></svg>
<div class="t" style="left:198px;top:480px;">Zoom Last</div>
<svg style="left:178px;top:481px;" width="16" height="16" viewBox="0 0 16 16"><path d="M1.5 14.5 L5.5 10.5" stroke="#333" stroke-width="2.6" stroke-linecap="round"/><path d="M1.8 14.2 L5.2 10.8" stroke="#e0b020" stroke-width="1.5" stroke-linecap="round"/><circle cx="9.5" cy="6.5" r="5" fill="#eeeeee" stroke="#555" stroke-width="1"/><rect x="9" y="9" width="7" height="7" rx="1" fill="#4a86c8"/><path d="M13.8 10.5 L11 12.5 L13.8 14.5" stroke="#fff" stroke-width="1.3" fill="none"/></svg>
<div class="t" style="left:198px;top:507px;color:#a4a6a7;">Zoom Next</div>
<svg style="left:178px;top:508px;" width="16" height="16" viewBox="0 0 16 16"><g opacity="0.35"><path d="M1.5 14.5 L5.5 10.5" stroke="#333" stroke-width="2.6" stroke-linecap="round"/><path d="M1.8 14.2 L5.2 10.8" stroke="#ddd" stroke-width="1.5" stroke-linecap="round"/><circle cx="9.5" cy="6.5" r="5" fill="#eeeeee" stroke="#999" stroke-width="1"/><rect x="9" y="9" width="7" height="7" rx="1" fill="#aaa"/><path d="M11.2 10.5 L14 12.5 L11.2 14.5" stroke="#fff" stroke-width="1.3" fill="none"/></g></svg>
<div class="a" style="left:176px;top:529px;width:414px;height:1px;background:#d4d4d4"></div>
<div class="t" style="left:198px;top:536px;"><u>D</u>ecorations</div>
<svg style="left:584px;top:540px" width="5" height="9"><path d="M0 0 L5 4.5 L0 9Z" fill="#7a7c7d"/></svg>
<div class="t" style="left:198px;top:563px;">Preview Mode</div>
<svg style="left:584px;top:567px" width="5" height="9"><path d="M0 0 L5 4.5 L0 9Z" fill="#7a7c7d"/></svg>
<div class="t" style="left:198px;top:590px;">Show Map Tips</div>
<svg style="left:178px;top:591px;" width="16" height="16" viewBox="0 0 16 16"><path d="M2.5 1.5 H14 Q15.5 1.5 15.5 3.5 V7 Q15.5 9 14 9 H7 L4.5 11.5 L5 9 H2.5 Q1 9 1 7 V3.5 Q1 1.5 2.5 1.5Z" fill="#faeb8a" stroke="#d9c34a" stroke-width="0.7"/><circle cx="3.5" cy="13" r="2" fill="#5fa35f" stroke="#3b703b" stroke-width="0.6"/></svg>
<div class="t" style="left:198px;top:617px;">New Spatial Bookmark…</div>
<svg style="left:178px;top:618px;" width="16" height="16" viewBox="0 0 16 16"><path d="M4 0.5 H9.5 V13 L6.8 11 L4 13Z" fill="#6b9bd1" stroke="#3c5f8a" stroke-width="0.6"/><rect x="8" y="8.5" width="7" height="7" rx="1.26" fill="#c9a20c"/><polygon points="11.50,9.20 12.20,10.79 13.92,10.60 12.90,12.00 13.92,13.40 12.20,13.21 11.50,14.80 10.80,13.21 9.08,13.40 10.10,12.00 9.08,10.60 10.80,10.79" fill="#fff"/><circle cx="11.5" cy="12.0" r="0.63" fill="#c9a20c"/></svg>
<div class="t" style="left:483px;top:617px;">Ctrl+B</div>
<div class="t" style="left:198px;top:644px;">Show Spatial Bookmarks</div>
<svg style="left:178px;top:645px;" width="16" height="16" viewBox="0 0 16 16"><path d="M1.5 2 Q1.5 1 2.5 1 H4 V1.5 H14.5 V14.5 H4 Q1.5 14.5 1.5 13Z" fill="#e2e2e2" stroke="#aaa" stroke-width="0.7"/><path d="M8 1 H11 V6.5 L9.5 5.5 L8 6.5Z" fill="#6b9bd1" stroke="#3c5f8a" stroke-width="0.5"/></svg>
<div class="t" style="left:483px;top:644px;">Ctrl+Shift+B</div>
<div class="t" style="left:198px;top:671px;">Show Spatial Bookmark Manager</div>
<svg style="left:178px;top:672px;" width="16" height="16" viewBox="0 0 16 16"><path d="M1.5 2 Q1.5 1 2.5 1 H4 V1.5 H14.5 V14.5 H4 Q1.5 14.5 1.5 13Z" fill="#e2e2e2" stroke="#aaa" stroke-width="0.7"/><path d="M8 1 H11 V6.5 L9.5 5.5 L8 6.5Z" fill="#6b9bd1" stroke="#3c5f8a" stroke-width="0.5"/></svg>
<div class="t" style="left:198px;top:698px;">Refresh</div>
<svg style="left:178px;top:699px;" width="16" height="16" viewBox="0 0 16 16"><path d="M1.5 8 A6.5 6 0 0 1 12.3 3.2 L14 1.5 L14.5 7 L9 6.7 L10.7 5 A4 3.6 0 0 0 4.6 7.7Z" fill="#4a86c8"/><path d="M14.5 8 A6.5 6 0 0 1 3.7 12.8 L2 14.5 L1.5 9 L7 9.3 L5.3 11 A4 3.6 0 0 0 11.4 8.3Z" fill="#3d78bd"/></svg>
<div class="t" style="left:483px;top:698px;">F5</div>
<div class="a" style="left:176px;top:720px;width:414px;height:1px;background:#d4d4d4"></div>
<div class="t" style="left:198px;top:727px;">Layer Visibility</div>
<svg style="left:584px;top:731px" width="5" height="9"><path d="M0 0 L5 4.5 L0 9Z" fill="#7a7c7d"/></svg>
<div class="a" style="left:176px;top:749px;width:414px;height:1px;background:#d4d4d4"></div>
<div class="t" style="left:198px;top:756px;">Panels</div>
<svg style="left:584px;top:760px" width="5" height="9"><path d="M0 0 L5 4.5 L0 9Z" fill="#7a7c7d"/></svg>
<div class="a" style="left:171px;top:778px;width:423px;height:27px;background:#3584e4"></div>
<div class="t" style="left:198px;top:783px;color:#ffffff;">Toolbars</div>
<svg style="left:584px;top:787px" width="5" height="9"><path d="M0 0 L5 4.5 L0 9Z" fill="#ffffff"/></svg>
<div class="t" style="left:198px;top:810px;">Toggle Full Scr<u>e</u>en Mode</div>
<div class="t" style="left:483px;top:810px;">F11</div>
<div class="t" style="left:198px;top:837px;">Toggle Panel <u>V</u>isibility</div>
<div class="t" style="left:483px;top:837px;">Ctrl+Tab</div>
<div class="t" style="left:198px;top:864px;">Toggle Map Only</div>
<div class="t" style="left:483px;top:864px;">Ctrl+Shift+Tab</div>
<div class="a" style="left:594px;top:124px;width:282px;height:513px;background:#fff;border:1px solid #a8a8a8"></div>
<div class="a" style="left:594px;top:124px;width:282px;height:27px;background:#3584e4"></div>
<div class="a" style="left:602px;top:131px;width:14px;height:14px;background:#fff;border:1px solid #c4c0bc"></div>
<svg style="left:602px;top:131px" width="14" height="14"><path d="M3.5 7.2 L6 11.5 L10.5 2.8" stroke="#1e1e1e" stroke-width="1.7" fill="none"/></svg>
<div class="t" style="left:622px;top:129px;color:#ffffff;">Advanced Digitizing Toolbar</div>
<div class="a" style="left:602px;top:158px;width:14px;height:14px;background:#fff;border:1px solid #c4c0bc"></div>
<div class="t" style="left:622px;top:156px;">Annotations Toolbar</div>
<div class="a" style="left:602px;top:185px;width:14px;height:14px;background:#fff;border:1px solid #c4c0bc"></div>
<svg style="left:602px;top:185px" width="14" height="14"><path d="M3.5 7.2 L6 11.5 L10.5 2.8" stroke="#1e1e1e" stroke-width="1.7" fill="none"/></svg>
<div class="t" style="left:622px;top:183px;">Attributes Toolbar</div>
<div class="a" style="left:602px;top:212px;width:14px;height:14px;background:#fff;border:1px solid #c4c0bc"></div>
<svg style="left:602px;top:212px" width="14" height="14"><path d="M3.5 7.2 L6 11.5 L10.5 2.8" stroke="#1e1e1e" stroke-width="1.7" fill="none"/></svg>
<div class="t" style="left:622px;top:210px;">Data Source Manager Toolbar</div>
<div class="a" style="left:602px;top:239px;width:14px;height:14px;background:#fff;border:1px solid #c4c0bc"></div>
<div class="t" style="left:622px;top:237px;">Database Toolbar</div>
<div class="a" style="left:602px;top:266px;width:14px;height:14px;background:#fff;border:1px solid #c4c0bc"></div>
<div class="t" style="left:622px;top:264px;">Digitizing Toolbar</div>
<div class="a" style="left:602px;top:293px;width:14px;height:14px;background:#fff;border:1px solid #c4c0bc"></div>
<svg style="left:602px;top:293px" width="14" height="14"><path d="M3.5 7.2 L6 11.5 L10.5 2.8" stroke="#1e1e1e" stroke-width="1.7" fill="none"/></svg>
<div class="t" style="left:622px;top:291px;">Help Toolbar</div>
<div class="a" style="left:602px;top:320px;width:14px;height:14px;background:#fff;border:1px solid #c4c0bc"></div>
<svg style="left:602px;top:320px" width="14" height="14"><path d="M3.5 7.2 L6 11.5 L10.5 2.8" stroke="#1e1e1e" stroke-width="1.7" fill="none"/></svg>
<div class="t" style="left:622px;top:318px;">Label Toolbar</div>
<div class="a" style="left:602px;top:347px;width:14px;height:14px;background:#fff;border:1px solid #c4c0bc"></div>
<div class="t" style="left:622px;top:345px;">Manage Layers Toolbar</div>
<div class="a" style="left:602px;top:374px;width:14px;height:14px;background:#fff;border:1px solid #c4c0bc"></div>
<svg style="left:602px;top:374px" width="14" height="14"><path d="M3.5 7.2 L6 11.5 L10.5 2.8" stroke="#1e1e1e" stroke-width="1.7" fill="none"/></svg>
<div class="t" style="left:622px;top:372px;">Map Navigation Toolbar</div>
<div class="a" style="left:602px;top:401px;width:14px;height:14px;background:#fff;border:1px solid #c4c0bc"></div>
<div class="t" style="left:622px;top:399px;">Mesh Digitizing Toolbar</div>
<div class="a" style="left:602px;top:428px;width:14px;height:14px;background:#fff;border:1px solid #c4c0bc"></div>
<svg style="left:602px;top:428px" width="14" height="14"><path d="M3.5 7.2 L6 11.5 L10.5 2.8" stroke="#1e1e1e" stroke-width="1.7" fill="none"/></svg>
<div class="t" style="left:622px;top:426px;">Plugins Toolbar</div>
<div class="a" style="left:602px;top:455px;width:14px;height:14px;background:#fff;border:1px solid #c4c0bc"></div>
<svg style="left:602px;top:455px" width="14" height="14"><path d="M3.5 7.2 L6 11.5 L10.5 2.8" stroke="#1e1e1e" stroke-width="1.7" fill="none"/></svg>
<div class="t" style="left:622px;top:453px;">Project Toolbar</div>
<div class="a" style="left:602px;top:482px;width:14px;height:14px;background:#fff;border:1px solid #c4c0bc"></div>
<div class="t" style="left:622px;top:480px;">Raster Toolbar</div>
<div class="a" style="left:602px;top:509px;width:14px;height:14px;background:#fff;border:1px solid #c4c0bc"></div>
<svg style="left:602px;top:509px" width="14" height="14"><path d="M3.5 7.2 L6 11.5 L10.5 2.8" stroke="#1e1e1e" stroke-width="1.7" fill="none"/></svg>
<div class="t" style="left:622px;top:507px;">Selection Toolbar</div>
<div class="a" style="left:602px;top:536px;width:14px;height:14px;background:#fff;border:1px solid #c4c0bc"></div>
<div class="t" style="left:622px;top:534px;">Shape Digitizing Toolbar</div>
<div class="a" style="left:602px;top:563px;width:14px;height:14px;background:#fff;border:1px solid #c4c0bc"></div>
<div class="t" style="left:622px;top:561px;">Snapping Toolbar</div>
<div class="a" style="left:602px;top:590px;width:14px;height:14px;background:#fff;border:1px solid #c4c0bc"></div>
<svg style="left:602px;top:590px" width="14" height="14"><path d="M3.5 7.2 L6 11.5 L10.5 2.8" stroke="#1e1e1e" stroke-width="1.7" fill="none"/></svg>
<div class="t" style="left:622px;top:588px;">Vector Toolbar</div>
<div class="a" style="left:602px;top:617px;width:14px;height:14px;background:#fff;border:1px solid #c4c0bc"></div>
<svg style="left:602px;top:617px" width="14" height="14"><path d="M3.5 7.2 L6 11.5 L10.5 2.8" stroke="#1e1e1e" stroke-width="1.7" fill="none"/></svg>
<div class="t" style="left:622px;top:615px;">Web Toolbar</div>
<svg style="left:722px;top:142px;" width="14" height="22" viewBox="0 0 14 22"><path d="M1 1 L1 17.5 L5 13.8 L8.2 20.5 L10.8 19.3 L7.7 12.7 L12.8 12.5Z" fill="#2e2e2e" stroke="#f4f4f4" stroke-width="0.9" stroke-linejoin="round"/></svg>
</body></html>
